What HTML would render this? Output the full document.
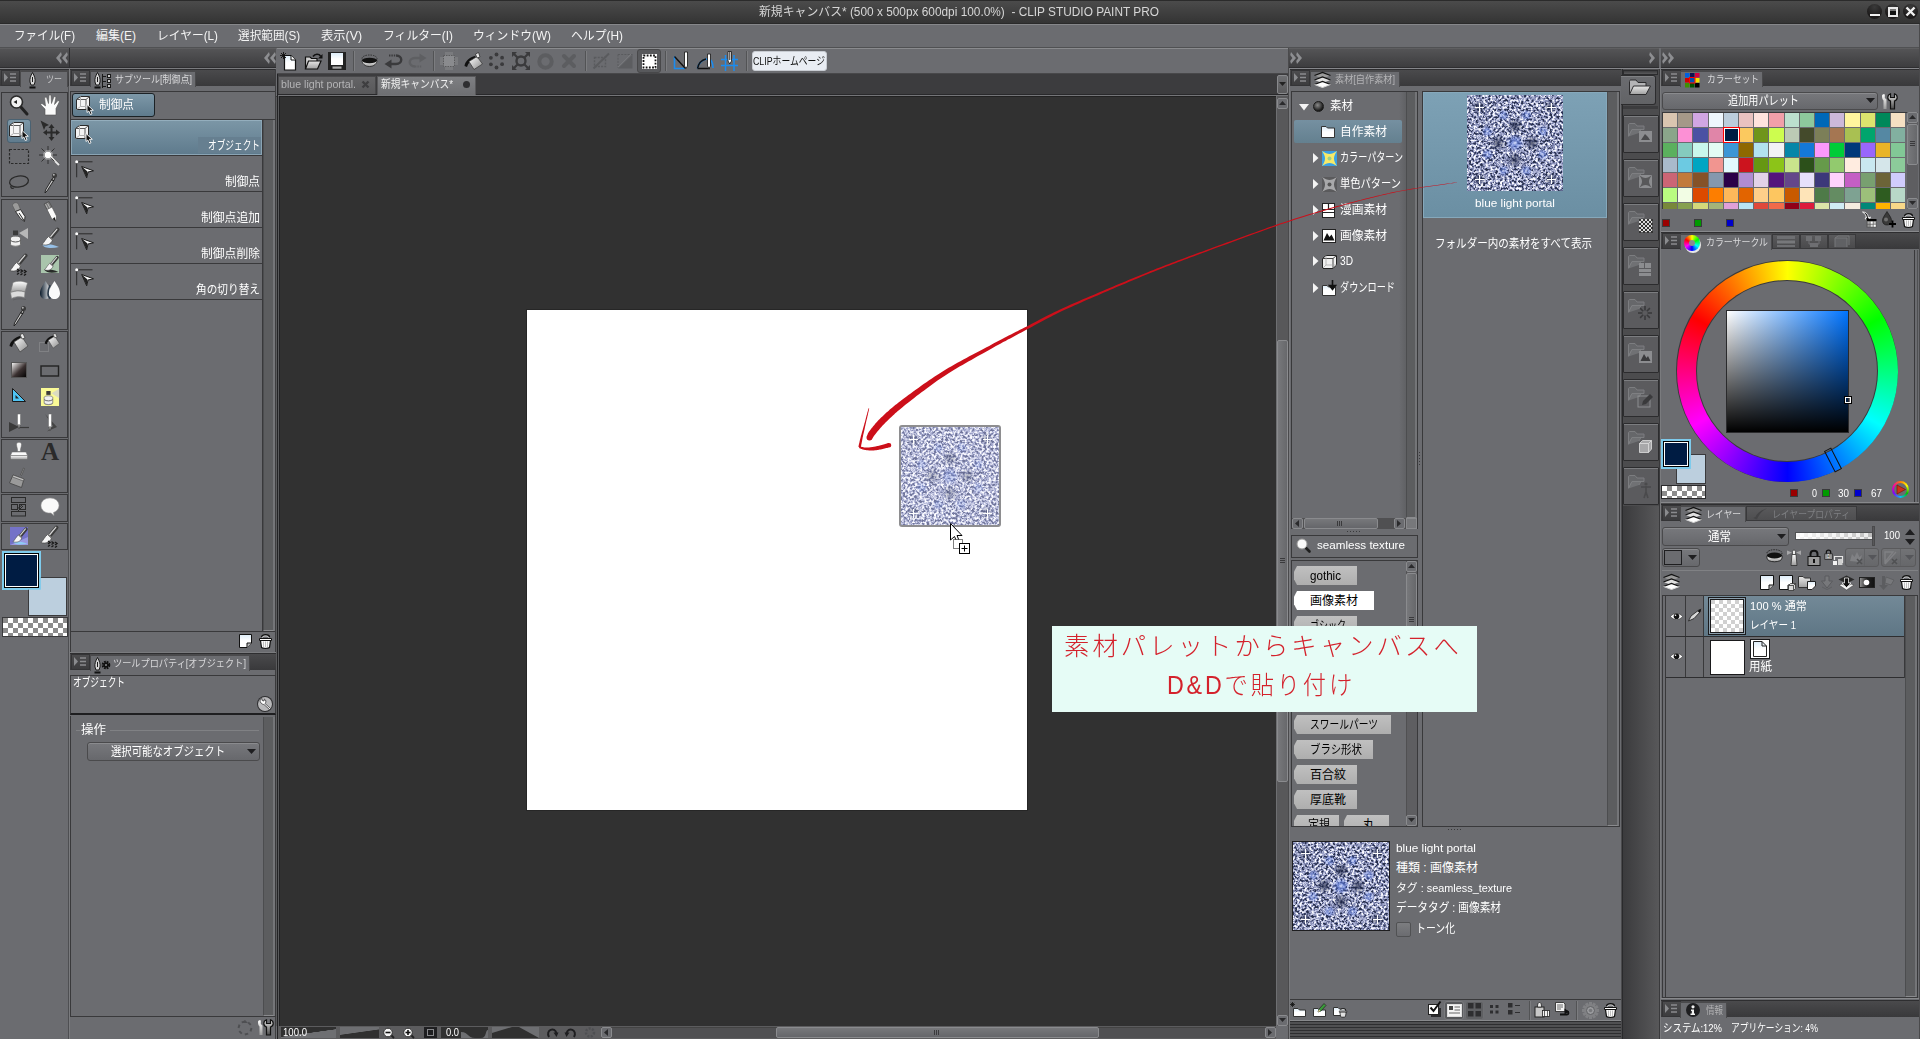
<!DOCTYPE html>
<html lang="ja"><head><meta charset="utf-8"><title>CLIP STUDIO PAINT PRO</title>
<style>
*{box-sizing:border-box;margin:0;padding:0}
html,body{width:1920px;height:1039px;overflow:hidden;background:#6b6c70}
body{position:relative;font-family:"Liberation Sans","Noto Sans CJK JP",sans-serif;font-size:12px;color:#f2f2f2}
div,span.t,svg{position:absolute}
span.t{white-space:nowrap;transform-origin:0 50%;display:block}
svg{overflow:visible}
</style></head>
<body>
<div style="left:0px;top:0px;width:1920px;height:24px;background:linear-gradient(#4b4b4b,#343434);border-top:1px solid #2b2b2b;border-bottom:1px solid #2a2a2a"></div>
<span class="t" style="left:759.0px;transform:scaleX(0.988);top:3.5px;font-size:12px;line-height:16px;color:#d6d6d6;white-space:pre;">新規キャンバス* (500 x 500px 600dpi 100.0%)  - CLIP STUDIO PAINT PRO</span>
<div style="left:1867.0px;top:3.8px;width:15px;height:15px;border-radius:50%;background:radial-gradient(circle at 50% 20%,#3a3a3a,#1c1a1a 70%)"></div>
<div style="left:1885.2px;top:3.8px;width:15px;height:15px;border-radius:50%;background:radial-gradient(circle at 50% 20%,#3a3a3a,#1c1a1a 70%)"></div>
<div style="left:1903.2px;top:3.8px;width:15px;height:15px;border-radius:50%;background:radial-gradient(circle at 50% 20%,#3a3a3a,#1c1a1a 70%)"></div>
<div style="left:1870px;top:14px;width:10px;height:2px;background:#f0f0f0"></div>
<div style="left:1888px;top:7px;width:10px;height:10px;border:2px solid #e8e8e8;background:linear-gradient(#777 0 30%,#111 30%)"></div>
<svg style="left:1905px;top:6px;" width="11" height="11" viewBox="0 0 11 11"><path d="M1.5 1.5 L9.5 9.5 M9.5 1.5 L1.5 9.5" stroke="#f0f0f0" stroke-width="2.4" fill="none"/></svg>
<div style="left:0px;top:24px;width:1920px;height:24px;background:#6b6c70;border-top:1px solid #86878a;border-bottom:1px solid #505153"></div>
<span class="t" style="left:14.0px;transform:scaleX(0.963);top:27.5px;font-size:12px;line-height:16px;color:#f4f4f4;">ファイル(F)</span>
<span class="t" style="left:96.0px;top:27.5px;font-size:12px;line-height:16px;color:#f4f4f4;">編集(E)</span>
<span class="t" style="left:157.0px;transform:scaleX(0.979);top:27.5px;font-size:12px;line-height:16px;color:#f4f4f4;">レイヤー(L)</span>
<span class="t" style="left:238.0px;transform:scaleX(0.969);top:27.5px;font-size:12px;line-height:16px;color:#f4f4f4;">選択範囲(S)</span>
<span class="t" style="left:321.0px;transform:scaleX(1.025);top:27.5px;font-size:12px;line-height:16px;color:#f4f4f4;">表示(V)</span>
<span class="t" style="left:383.0px;transform:scaleX(0.985);top:27.5px;font-size:12px;line-height:16px;color:#f4f4f4;">フィルター(I)</span>
<span class="t" style="left:473.0px;transform:scaleX(0.983);top:27.5px;font-size:12px;line-height:16px;color:#f4f4f4;">ウィンドウ(W)</span>
<span class="t" style="left:571.0px;transform:scaleX(0.987);top:27.5px;font-size:12px;line-height:16px;color:#f4f4f4;">ヘルプ(H)</span>
<div style="left:0px;top:48px;width:69px;height:20px;background:linear-gradient(#545456,#3d3d3f);border-top:1px solid #5e5e60;border-bottom:1px solid #2e2e30"></div>
<div style="left:70px;top:48px;width:206px;height:20px;background:linear-gradient(#545456,#3d3d3f);border-top:1px solid #5e5e60;border-bottom:1px solid #2e2e30"></div>
<div style="left:0px;top:68px;width:276px;height:1px;background:#7a7b7e"></div>
<div style="left:68px;top:69px;width:1px;height:970px;background:#4e4f52"></div>
<div style="left:69px;top:69px;width:1px;height:970px;background:#7a7b7e"></div>
<div style="left:69px;top:48px;width:1px;height:20px;background:#2e2e30"></div>
<svg style="left:56px;top:52px;" width="12" height="12" viewBox="0 0 12 12"><path d="M5 0 L0 6 L5 12 L5.8 9 L3.6 6 L5.8 3 Z M11 0 L6 6 L11 12 L11.8 9 L9.6 6 L11.8 3 Z" fill="#8d8e91"/></svg>
<svg style="left:264px;top:52px;" width="12" height="12" viewBox="0 0 12 12"><path d="M5 0 L0 6 L5 12 L5.8 9 L3.6 6 L5.8 3 Z M11 0 L6 6 L11 12 L11.8 9 L9.6 6 L11.8 3 Z" fill="#8d8e91"/></svg>
<div style="left:277px;top:48px;width:1011px;height:26px;background:#6b6c70;border-top:1px solid #8a8b8e;border-bottom:1px solid #48484a"></div>
<svg style="left:280px;top:52px;" width="17" height="19" viewBox="0 0 17 19"><path d="M4.500 3.500H11L15.500 8V18H4.500Z" fill="url(#gPaper)" stroke="#111" stroke-width="1.200"/><path d="M11 3.500V8H15.500" fill="#fff" stroke="#111" stroke-width="1"/><path d="M3.500 0V7M0 3.500H7M1 1L6 6M6 1L1 6" stroke="#111" stroke-width=".9"/></svg>
<svg style="left:304px;top:52px;" width="19" height="19" viewBox="0 0 19 19"><path d="M1.500 17V5H6L7.500 6.500H13V9" fill="#d0d0d0" stroke="#111" stroke-width="1.200"/><path d="M1.500 17L4.500 9H17L13.500 17Z" fill="url(#gFolder)" stroke="#111" stroke-width="1.200"/><path d="M9 4.500C11 1.500 15 1.500 16.500 4" fill="none" stroke="#111" stroke-width="1.600"/><path d="M18.500 2V6.500H14Z" fill="#111"/></svg>
<svg style="left:328px;top:52px;" width="18" height="18" viewBox="0 0 18 18"><rect x="0" y="0" width="18" height="18" fill="#222"/><rect x="3" y="1" width="12" height="12" fill="url(#gPaper)"/><rect x="4.500" y="14.500" width="9" height="2.200" fill="#aaa"/></svg>
<div style="left:353px;top:51px;width:1px;height:20px;background:#525355"></div>
<div style="left:354px;top:51px;width:1px;height:20px;background:#7c7d80"></div>
<svg style="left:361px;top:54px;" width="17" height="13" viewBox="0 0 17 13"><ellipse cx="8.500" cy="4.500" rx="7.500" ry="3.500" fill="none" stroke="#222" stroke-width=".8" stroke-dasharray="1.500 1"/><path d="M1 6.500C1 9.500 4 12.500 8.500 12.500C13 12.500 16 9.500 16 6.500Z" fill="url(#gMetalV)" stroke="#222" stroke-width=".8"/><ellipse cx="8.500" cy="6.500" rx="7.500" ry="2.800" fill="#111"/></svg>
<svg style="left:384px;top:54px;" width="19" height="14" viewBox="0 0 19 14"><path d="M5 1.500H12" stroke="#3a3a3c" stroke-width="2" stroke-dasharray="1.400 1"/><path d="M12 1.500C19 1.500 19 10 12 10H7" fill="none" stroke="#3a3a3c" stroke-width="2.400"/><path d="M0.500 10L7.500 5.500V14.500Z" fill="#3a3a3c"/></svg>
<svg style="left:408px;top:54px;" width="19" height="14" viewBox="0 0 19 14"><path d="M7 12.500H14" stroke="#5e5f62" stroke-width="2" stroke-dasharray="1.400 1"/><path d="M7 12.500C0 12.500 0 4 7 4H12" fill="none" stroke="#5e5f62" stroke-width="2.400"/><path d="M18.500 4L11.500 -0.500V8.500Z" fill="#5e5f62"/></svg>
<div style="left:433px;top:51px;width:1px;height:20px;background:#525355"></div>
<div style="left:434px;top:51px;width:1px;height:20px;background:#7c7d80"></div>
<svg style="left:440px;top:52px;" width="18" height="18" viewBox="0 0 18 18"><path d="M5 0H13V5H18V13H13V18H5V13H0V5H5Z" fill="#7a7b7e"/><rect x="3.500" y="3.500" width="11" height="11" fill="#8a8b8e" stroke="#5a5a5c" stroke-width="1" stroke-dasharray="1.500 1"/></svg>
<svg style="left:464px;top:52px;" width="19" height="19" viewBox="0 0 19 19"><path d="M0.500 14C1 9 6 5 11 4L12 6C7 8 4 11 3 15Z" fill="#111"/><path d="M5 9.500L13 4.500L18.500 12L10 17.500Z" fill="url(#gMetal)" stroke="#333" stroke-width=".7"/><path d="M11.500 2L14.500 0.500L16 5L13 6Z" fill="#e8e8e8" stroke="#222" stroke-width=".7"/></svg>
<svg style="left:488px;top:52px;" width="18" height="18" viewBox="0 0 18 18"><circle cx="8.5" cy="15.5" r="1.900" fill="#3a3a3c"/><circle cx="2.9" cy="12.3" r="1.900" fill="#3a3a3c"/><circle cx="2.9" cy="5.8" r="1.900" fill="#3a3a3c"/><circle cx="8.5" cy="2.5" r="1.900" fill="#3a3a3c"/><circle cx="14.1" cy="5.7" r="1.900" fill="#3a3a3c"/><circle cx="14.1" cy="12.2" r="1.900" fill="#3a3a3c"/></svg>
<svg style="left:512px;top:52px;" width="18" height="18" viewBox="0 0 18 18"><circle cx="9" cy="9" r="4.500" fill="none" stroke="#3a3a3c" stroke-width="2.400"/><path d="M5.500 5.500L1.500 1.500M12.500 5.500L16.500 1.500M5.500 12.500L1.500 16.500M12.500 12.500L16.500 16.500" stroke="#3a3a3c" stroke-width="2.200"/><path d="M0 0H5L0 5ZM18 0H13L18 5ZM0 18H5L0 13ZM18 18H13L18 13Z" fill="#3a3a3c"/></svg>
<svg style="left:537px;top:53px;" width="17" height="17" viewBox="0 0 17 17"><circle cx="8.500" cy="8.500" r="6.200" fill="none" stroke="#5c5d60" stroke-width="4"/></svg>
<svg style="left:562px;top:54px;" width="14" height="14" viewBox="0 0 14 14"><path d="M2 2L12 12M12 2L2 12" stroke="#5c5d60" stroke-width="4" stroke-linecap="round"/></svg>
<div style="left:585px;top:51px;width:1px;height:20px;background:#525355"></div>
<div style="left:586px;top:51px;width:1px;height:20px;background:#7c7d80"></div>
<svg style="left:593px;top:53px;" width="17" height="16" viewBox="0 0 17 16"><rect x="1.500" y="4.500" width="11" height="9" fill="none" stroke="#5a5b5e" stroke-width="1.400" stroke-dasharray="2 1.200"/><path d="M0.500 15.500L16 0.500" stroke="#5a5b5e" stroke-width="2"/></svg>
<svg style="left:617px;top:53px;" width="17" height="16" viewBox="0 0 17 16"><path d="M1 1.500H15.500M1 1.500V15" stroke="#5a5b5e" stroke-width="1" stroke-dasharray="2 1.200" fill="none"/><path d="M1 15.500L15.500 1.500V15.500Z" fill="#5c5d60"/><path d="M1 14L14 1" stroke="#77787b" stroke-width="1"/></svg>
<div style="left:637px;top:49px;width:24px;height:24px;background:#58595c;border:1px solid #48484a;border-radius:3px"></div>
<svg style="left:642px;top:54px;" width="15" height="15" viewBox="0 0 15 15"><rect x="0" y="0" width="15" height="15" fill="#fff"/><rect x="1.500" y="1.500" width="12" height="12" fill="none" stroke="#111" stroke-width="1.800" stroke-dasharray="1.800 1.400"/></svg>
<div style="left:665px;top:51px;width:1px;height:20px;background:#525355"></div>
<div style="left:666px;top:51px;width:1px;height:20px;background:#7c7d80"></div>
<svg style="left:673px;top:51px;" width="17" height="20" viewBox="0 0 17 20"><path d="M1.500 5.500V17.500H12" fill="none" stroke="#1a8cf0" stroke-width="1.600"/><path d="M1.500 5.500L12.500 17.500" stroke="#111" stroke-width="1.400"/><path d="M11.500 1V15L13 17.500L14.500 15V1Z" fill="#fff" stroke="#222" stroke-width=".9"/></svg>
<svg style="left:696px;top:51px;" width="18" height="20" viewBox="0 0 18 20"><path d="M1.500 17.500C2.500 11 8 7.500 13 8C16 9 17 13 17 17" fill="none" stroke="#1a8cf0" stroke-width="1.600"/><path d="M1.500 17.500H14M1.500 17.500C2.500 12 6 9 10 8" fill="none" stroke="#111" stroke-width="1.400"/><path d="M11.500 3V15L13 17.500L14.500 15V3Z" fill="#fff" stroke="#222" stroke-width=".9"/></svg>
<svg style="left:721px;top:51px;" width="18" height="20" viewBox="0 0 18 20"><path d="M0 8.500H17M0 14.500H17M4.500 4V20M13 4V20" stroke="#1a8cf0" stroke-width="1.500"/><path d="M7 0.500V10L8.800 13L10.500 10V0.500Z" fill="#fff" stroke="#222" stroke-width=".9"/><path d="M8.800 1V9" stroke="#222" stroke-width="1"/></svg>
<div style="left:746px;top:51px;width:1px;height:20px;background:#525355"></div>
<div style="left:747px;top:51px;width:1px;height:20px;background:#7c7d80"></div>
<div style="left:752px;top:51px;width:75px;height:20px;background:#e9edf3;border:1px solid #c8ccd2;border-radius:3px"></div>
<span class="t" style="left:753.0px;transform:scaleX(0.801);top:53.5px;font-size:11px;line-height:15px;color:#111111;">CLIPホームページ</span>
<div style="left:1289px;top:48px;width:370px;height:20px;background:linear-gradient(#545456,#3d3d3f);border-top:1px solid #5e5e60;border-bottom:1px solid #2e2e30"></div>
<div style="left:1661px;top:48px;width:259px;height:20px;background:linear-gradient(#545456,#3d3d3f);border-top:1px solid #5e5e60;border-bottom:1px solid #2e2e30"></div>
<div style="left:1289px;top:68px;width:631px;height:1px;background:#85868a"></div>
<svg style="left:1291px;top:52px;" width="12" height="12" viewBox="0 0 12 12"><path d="M0 0 L5 6 L0 12 L-0.8 9 L1.4 6 L-0.8 3 Z M6 0 L11 6 L6 12 L5.2 9 L7.4 6 L5.2 3 Z" fill="#8d8e91"/></svg>
<svg style="left:1663px;top:52px;" width="12" height="12" viewBox="0 0 12 12"><path d="M0 0 L5 6 L0 12 L-0.8 9 L1.4 6 L-0.8 3 Z M6 0 L11 6 L6 12 L5.2 9 L7.4 6 L5.2 3 Z" fill="#8d8e91"/></svg>
<svg style="left:1649px;top:52px;" width="8" height="12" viewBox="0 0 8 12"><path d="M1 0 L6 6 L1 12 L0.2 9 L2.4 6 L0.2 3 Z" fill="#8d8e91"/></svg>
<div style="left:0px;top:69px;width:69px;height:17px;background:linear-gradient(#4a4a4c,#39393b);border-top:1px solid #2e2e30"></div>
<div style="left:1px;top:70px;width:19px;height:16px;background:linear-gradient(#4c4c4e,#3c3c3e);border:1px solid #343436"></div>
<svg style="left:4px;top:73px;" width="13" height="9" viewBox="0 0 13 9"><path d="M0 0L4 4.5L0 9Z" fill="#8a8b8e"/><path d="M6 1H12M6 4.500H12M6 8H12" stroke="#8a8b8e" stroke-width="1.6"/></svg>
<div style="left:20px;top:71px;width:48px;height:16px;background:#6b6c70;border:1px solid #4a4a4c;border-bottom:none"></div>
<svg style="left:28px;top:72px;" width="9" height="17" viewBox="0 0 9 17"><path d="M4.500 0.500C2.500 4 1.500 7 2 10L3 13H6L7 10C7.500 7 6.500 4 4.500 0.500Z" fill="#d8d8d8" stroke="#1a1a1a" stroke-width="1"/><path d="M4.500 5V10" stroke="#1a1a1a" stroke-width="1"/><path d="M1.500 15.500H7.500" stroke="#111" stroke-width="2"/></svg>
<span class="t" style="left:46.0px;transform:scaleX(0.800);top:73.0px;font-size:10px;line-height:14px;color:#c8c8ca;">ツー</span>
<div style="left:1px;top:92px;width:67px;height:105px;border:1px solid #39393b;background:#6b6c70"></div>
<div style="left:1px;top:199px;width:67px;height:131px;border:1px solid #39393b;background:#6b6c70"></div>
<div style="left:1px;top:331px;width:67px;height:107px;border:1px solid #39393b;background:#6b6c70"></div>
<div style="left:1px;top:439px;width:67px;height:54px;border:1px solid #39393b;background:#6b6c70"></div>
<div style="left:1px;top:494px;width:67px;height:28px;border:1px solid #39393b;background:#6b6c70"></div>
<div style="left:1px;top:523px;width:67px;height:27px;border:1px solid #39393b;background:#6b6c70"></div>
<svg width="0" height="0" style="left:0;top:0"><defs>
<linearGradient id="gMetal" x1="0" y1="0" x2="1" y2="1"><stop offset="0" stop-color="#fff"/><stop offset="1" stop-color="#8a8a8a"/></linearGradient>
<linearGradient id="gMetalV" x1="0" y1="0" x2="0" y2="1"><stop offset="0" stop-color="#fff"/><stop offset="1" stop-color="#9a9a9a"/></linearGradient>
<linearGradient id="gDark" x1="0" y1="0" x2="1" y2="1"><stop offset="0" stop-color="#fff"/><stop offset=".55" stop-color="#3a3030"/><stop offset="1" stop-color="#000"/></linearGradient>
<linearGradient id="gDrop" x1="0" y1="0" x2="1" y2="0"><stop offset="0" stop-color="#0a1a2a"/><stop offset="1" stop-color="#fff"/></linearGradient>
<linearGradient id="gPaper" x1="0" y1="0" x2="0" y2="1"><stop offset="0" stop-color="#dcecf8"/><stop offset=".5" stop-color="#fff"/></linearGradient>
<linearGradient id="gDarkH" x1="0" y1="0" x2="1" y2="0"><stop offset="0" stop-color="#999"/><stop offset=".5" stop-color="#222"/><stop offset="1" stop-color="#111"/></linearGradient>
<linearGradient id="gWrench" x1="0" y1="0" x2="0" y2="1"><stop offset="0" stop-color="#e8e8e8"/><stop offset="1" stop-color="#4a4a4a"/></linearGradient>
<linearGradient id="gFolder" x1="0" y1="0" x2="0" y2="1"><stop offset="0" stop-color="#e8e8e8"/><stop offset="1" stop-color="#a0a0a0"/></linearGradient>
</defs></svg>
<div style="left:7px;top:119px;width:24px;height:24px;background:linear-gradient(#7d98a8,#5f7b8d);border-radius:3px;border:1px solid #4a6272"></div>
<svg style="left:8px;top:94px;" width="22" height="22" viewBox="0 0 22 22"><path d="M12 12L19 20" stroke="#222" stroke-width="3" stroke-linecap="round"/><circle cx="8.500" cy="8" r="6" fill="#f2f2f2" stroke="#2a2a2a" stroke-width="1.600"/><path d="M5.500 8L9 6V10Z" fill="#222"/></svg>
<svg style="left:39px;top:94px;" width="22" height="22" viewBox="0 0 22 22"><path d="M6 21V15L1.500 10.500L3 9.500L6.500 12L5.500 3.500L7.500 3L9.500 9.500L10 1L12 1L12.500 9.500L15 2.500L17 3L15.500 10.500L19 6.500L20.500 7.500L17 14.500V21Z" fill="#fafafa" stroke="#555" stroke-width=".6"/></svg>
<svg style="left:8px;top:120px;" width="22" height="22" viewBox="0 0 22 22"><path d="M1.500 5.500L5.500 2.500H15.500V13.500L12 16.500H1.500Z" fill="#f4f4f4" stroke="#2a2a2a" stroke-width="1"/><path d="M1.500 5.500H12V16.500M12 5.500L15.500 2.500" fill="none" stroke="#5a5a5a" stroke-width="1"/><path d="M5.500 2.500V13.500H15.500M5.500 13.500L1.500 16.500" fill="none" stroke="#b0b0b0" stroke-width="1"/><path d="M14 10.500V18.500L15.800 17L17.300 20.500L19 19.800L17.500 16.300H20.300Z" fill="#111" stroke="#fff" stroke-width=".9"/></svg>
<svg style="left:39px;top:120px;" width="22" height="22" viewBox="0 0 22 22"><path d="M1.500 0.500L10 5L6.500 6.500L5 10Z" fill="#2a2a2a"/><path d="M12.500 4L15.500 8H13.500V11.500H17V9.500L21 12.500L17 15.500V13.500H13.500V17H15.500L12.500 21L9.500 17H11.500V13.500H8V15.500L4 12.500L8 9.500V11.500H11.500V8H9.500Z" fill="#2a2a2a"/></svg>
<svg style="left:8px;top:146px;" width="22" height="22" viewBox="0 0 22 22"><rect x="1.500" y="3.500" width="19" height="14" fill="none" stroke="#2a2a2a" stroke-width="1.200" stroke-dasharray="2.500 1.500"/></svg>
<svg style="left:39px;top:146px;" width="22" height="22" viewBox="0 0 22 22"><path d="M10 9L20 19" stroke="#e8e8e8" stroke-width="2"/><path d="M10 9L20 19" stroke="#555" stroke-width=".6" transform="translate(.9 -.9)"/><path d="M9 0V18M0 9H18M2.500 2.500L15.500 15.500M15.500 2.500L2.500 15.500" stroke="#2a2a2a" stroke-width=".9"/><circle cx="9" cy="9" r="3.200" fill="#fff"/><circle cx="9" cy="9" r="5" fill="#fff" opacity=".35"/></svg>
<svg style="left:8px;top:172px;" width="22" height="22" viewBox="0 0 22 22"><ellipse cx="11" cy="9.500" rx="9.500" ry="5.500" fill="none" stroke="#2a2a2a" stroke-width="1.300" transform="rotate(-8 11 9.500)"/><path d="M3.500 13.500C2 15 3 17 6 16" fill="none" stroke="#2a2a2a" stroke-width="1.200"/></svg>
<svg style="left:39px;top:172px;" width="22" height="22" viewBox="0 0 22 22"><circle cx="15.500" cy="3.500" r="2.500" fill="#3a3a3a"/><circle cx="14.800" cy="2.800" r="1" fill="#b0b0b0"/><path d="M14 5.500L16 6.500L8 19L6 21L6.500 18Z" fill="#c8c8c8" stroke="#1e1e1e" stroke-width=".9"/><path d="M12.500 7.500L15 8.800" stroke="#1e1e1e" stroke-width="1.400"/></svg>
<svg style="left:8px;top:201px;" width="22" height="22" viewBox="0 0 22 22"><path d="M4.500 4.500C4.500 1.500 9.500 0.500 10.500 3.500L12.500 8.500L7.500 10.500Z" fill="#9a9a9a" stroke="#555" stroke-width=".6"/><path d="M7.500 10.500L12.500 8.500L17 15.500L16.500 20.500L12.500 17.500Z" fill="#f6f6f6" stroke="#222" stroke-width=".9"/><path d="M11 12L16 19.500" stroke="#222" stroke-width="1"/></svg>
<svg style="left:39px;top:201px;" width="22" height="22" viewBox="0 0 22 22"><path d="M5 3L10 0.500L13 6L8 8.500Z" fill="#777" stroke="#444" stroke-width=".6"/><path d="M6.500 3.200L9 8M8.500 2.200L11 7" stroke="#ccc" stroke-width=".8"/><path d="M8 8.500L13 6L17.500 15L17 20.500L12.500 17.500Z" fill="#fafafa" stroke="#555" stroke-width=".7"/><path d="M15.500 16L17 20.500L13.800 18Z" fill="#111"/></svg>
<svg style="left:8px;top:227px;" width="22" height="22" viewBox="0 0 22 22"><g transform="translate(0 0)"><path d="M11 6L20 1V12Z" fill="#d0d0d0" opacity=".75"/><rect x="5" y="3.500" width="5" height="4.500" fill="#3a3a3a"/><path d="M2.500 11C2.500 8.500 12.500 8.500 12.500 11V17.500C12.500 20 2.500 20 2.500 17.500Z" fill="#f0f0f0" stroke="#555" stroke-width=".7"/><path d="M2.500 13.500C5 15.500 10 15.500 12.500 13.500" stroke="#555" stroke-width="1" fill="none"/><path d="M2.500 17.500C5 19.800 10 19.800 12.500 17.500" stroke="#888" stroke-width=".8" fill="none"/></g></svg>
<svg style="left:39px;top:227px;" width="22" height="22" viewBox="0 0 22 22"><g transform="translate(0 0)"><path d="M3 17.500C7 16 14 17.500 20 20C13 21.500 5 21.500 3 17.500Z" fill="#9ccaf4" opacity=".9"/><path d="M18.500 2.500L11.500 11" stroke="#3c3c3c" stroke-width="4" stroke-linecap="round"/><path d="M17.800 2.300L11 10.500" stroke="#d4d4d4" stroke-width="1.300" stroke-linecap="round"/><path d="M9.500 9.500L13.500 13C12 17.500 7.500 19 3 17.500C5.500 15 6.500 12 9.500 9.500Z" fill="#f6f6f6" stroke="#444" stroke-width=".7"/><path d="M9.800 9.300L13.700 12.800" stroke="#777" stroke-width="1.400"/></g></svg>
<svg style="left:8px;top:253px;" width="22" height="22" viewBox="0 0 22 22"><g transform="translate(-1 0)"><path d="M3 17.500C7 16 14 17.500 20 20C13 21.500 5 21.500 3 17.500Z" fill="none" opacity=".9"/><path d="M18.500 2.500L11.500 11" stroke="#3c3c3c" stroke-width="4" stroke-linecap="round"/><path d="M17.800 2.300L11 10.500" stroke="#d4d4d4" stroke-width="1.300" stroke-linecap="round"/><path d="M9.500 9.500L13.500 13C12 17.500 7.500 19 3 17.500C5.500 15 6.500 12 9.500 9.500Z" fill="#f6f6f6" stroke="#444" stroke-width=".7"/><path d="M9.800 9.300L13.700 12.800" stroke="#777" stroke-width="1.400"/></g><path d="M9 19l2 -1.500l-2 -1.500M12.500 19.500l2 -1.500l-2 -1.500M16 20l2 -1.500l-2 -1.500M9 21.500l2 -1.500M12.500 22l2 -1.500M16 22.500l2 -1.500" stroke="#1a1a1a" stroke-width="1.400" fill="none"/></svg>
<svg style="left:39px;top:253px;" width="22" height="22" viewBox="0 0 22 22"><rect x="2" y="2" width="18" height="18" fill="#a9c5ac"/><g transform="translate(3 2.500) scale(.82)"><path d="M3 17.500C7 16 14 17.500 20 20C13 21.500 5 21.500 3 17.500Z" fill="#1a1a1a" opacity=".9"/><path d="M18.500 2.500L11.500 11" stroke="#3c3c3c" stroke-width="4" stroke-linecap="round"/><path d="M17.800 2.300L11 10.500" stroke="#d4d4d4" stroke-width="1.300" stroke-linecap="round"/><path d="M9.500 9.500L13.500 13C12 17.500 7.500 19 3 17.500C5.500 15 6.500 12 9.500 9.500Z" fill="#f6f6f6" stroke="#444" stroke-width=".7"/><path d="M9.800 9.300L13.700 12.800" stroke="#777" stroke-width="1.400"/></g></svg>
<svg style="left:8px;top:279px;" width="22" height="22" viewBox="0 0 22 22"><path d="M5 3.500C10 1.500 15 2 19.500 4L17 13C12.500 11.500 7.500 11.500 2.500 13.500Z" fill="url(#gMetalV)" stroke="#777" stroke-width=".6"/><path d="M2.500 13.500C7.500 11.500 12.500 11.500 17 13L16.500 18.500C12 17 7.500 17.500 3.500 19.500Z" fill="#dcdcdc" stroke="#777" stroke-width=".6"/><path d="M5 21C9 19.500 13 19.500 18 20.500" stroke="#555" stroke-width=".8" opacity=".6" fill="none"/></svg>
<svg style="left:39px;top:279px;" width="22" height="22" viewBox="0 0 22 22"><path d="M6.500 2C9 6 12 10 12 14.500C12 18 9.500 20 6.500 20C3.500 20 1 18 1 14.500C1 10 4 6 6.500 2Z" fill="url(#gDrop)"/><path d="M15.500 2C18 6 21 10 21 14.500C21 18 18.500 20 15.500 20C12.500 20 10 18 10 14.500C10 10 13 6 15.500 2Z" fill="#fafafa"/><path d="M11 6C9.800 9 9 11.500 9 14.500C9 17 10 18.800 11.500 19.500" fill="none" stroke="#2a3a4a" stroke-width="1.600"/></svg>
<svg style="left:8px;top:305px;" width="22" height="22" viewBox="0 0 22 22"><circle cx="15.500" cy="3.500" r="2.500" fill="#3a3a3a"/><circle cx="14.800" cy="2.800" r="1" fill="#b0b0b0"/><path d="M14 5.500L16 6.500L8 19L6 21L6.500 18Z" fill="#c8c8c8" stroke="#1e1e1e" stroke-width=".9"/><path d="M12.500 7.500L15 8.800" stroke="#1e1e1e" stroke-width="1.400"/></svg>
<svg style="left:8px;top:333px;" width="22" height="22" viewBox="0 0 22 22"><g transform="translate(0 0) scale(1.0)"><path d="M1.500 13C2 8 8 4 12 3L13 5C8 7 5 10 4 14Z" fill="#111"/><path d="M6 9L14 4L20 13L12 19Z" fill="url(#gMetal)" stroke="#444" stroke-width=".7"/><path d="M12 1.500L15 0.500L17 5L14 6Z" fill="#e8e8e8" stroke="#333" stroke-width=".7"/></g></svg>
<svg style="left:39px;top:333px;" width="22" height="22" viewBox="0 0 22 22"><rect x="0.500" y="9.500" width="9" height="9" fill="none" stroke="#808184" stroke-width="1"/><g transform="translate(4.5 0) scale(0.8)"><path d="M1.500 13C2 8 8 4 12 3L13 5C8 7 5 10 4 14Z" fill="#111"/><path d="M6 9L14 4L20 13L12 19Z" fill="url(#gMetal)" stroke="#444" stroke-width=".7"/><path d="M12 1.500L15 0.500L17 5L14 6Z" fill="#e8e8e8" stroke="#333" stroke-width=".7"/></g></svg>
<svg style="left:8px;top:360px;" width="22" height="22" viewBox="0 0 22 22"><rect x="3.500" y="2.500" width="15" height="15" fill="url(#gDark)" stroke="#555" stroke-width="1"/></svg>
<svg style="left:39px;top:360px;" width="22" height="22" viewBox="0 0 22 22"><rect x="2" y="6" width="17.500" height="10" fill="none" stroke="#222" stroke-width="1.400"/></svg>
<svg style="left:8px;top:386px;" width="22" height="22" viewBox="0 0 22 22"><path d="M4.500 2.500V15.500H17.500Z" fill="#4fc4f4" stroke="#1a1a1a" stroke-width="1"/><path d="M7.500 9V12.500H11Z" fill="#222"/></svg>
<svg style="left:39px;top:386px;" width="22" height="22" viewBox="0 0 22 22"><rect x="2" y="2" width="18" height="18" fill="#fafa96"/><g transform="translate(3 2) scale(.86)"><path d="M11 6L20 1V12Z" fill="#d0d0d0" opacity=".75"/><rect x="5" y="3.500" width="5" height="4.500" fill="#3a3a3a"/><path d="M2.500 11C2.500 8.500 12.500 8.500 12.500 11V17.500C12.500 20 2.500 20 2.500 17.500Z" fill="#f0f0f0" stroke="#555" stroke-width=".7"/><path d="M2.500 13.500C5 15.500 10 15.500 12.500 13.500" stroke="#555" stroke-width="1" fill="none"/><path d="M2.500 17.500C5 19.800 10 19.800 12.500 17.500" stroke="#888" stroke-width=".8" fill="none"/></g></svg>
<svg style="left:8px;top:412px;" width="22" height="22" viewBox="0 0 22 22"><path d="M1 10L11 15L1 20Z" fill="#3a3a3a"/><path d="M11 15.500H21" stroke="#3a3a3a" stroke-width="1.200"/><rect x="9.500" y="2" width="3" height="11" fill="#fff" stroke="#666" stroke-width=".5"/><path d="M10 13L11 17L12 13Z" fill="#ddd" stroke="#333" stroke-width=".5"/></svg>
<svg style="left:39px;top:412px;" width="22" height="22" viewBox="0 0 22 22"><path d="M6 2L18 15L8 19.500L14 14Z" fill="#444"/><rect x="9.500" y="2" width="3" height="13" fill="#fff" stroke="#666" stroke-width=".5"/><path d="M10 15L11 19L12 15Z" fill="#ddd" stroke="#333" stroke-width=".5"/></svg>
<svg style="left:8px;top:441px;" width="22" height="22" viewBox="0 0 22 22"><path d="M8.500 3.500C8.500 0.500 13.500 0.500 13.500 3.500C13.500 6 12 8 12.500 10.500H9.500C10 8 8.500 6 8.500 3.500Z" fill="#f6f6f6" stroke="#666" stroke-width=".5"/><path d="M4 11H18L19.500 14.500H2.500Z" fill="#fafafa" stroke="#666" stroke-width=".5"/><path d="M2.500 14.500H19.500V18.500H2.500Z" fill="url(#gMetalV)" stroke="#666" stroke-width=".5"/></svg>
<svg style="left:39px;top:441px;" width="22" height="22" viewBox="0 0 22 22"><text x="11" y="19" font-family="Liberation Serif,serif" font-weight="bold" font-size="25" text-anchor="middle" fill="#2a2a2a">A</text></svg>
<svg style="left:8px;top:467px;" width="22" height="22" viewBox="0 0 22 22"><path d="M15.500 1L16.500 1.500L13.500 8.500L12.500 8Z" fill="#999" stroke="#444" stroke-width=".6"/><path d="M5 8L16 12L13.500 20.500L1.500 16Z" fill="#9a9a9a" stroke="#444" stroke-width=".8"/><path d="M5 8L16 12L15.500 14L4.500 10Z" fill="#c4c4c4" stroke="#444" stroke-width=".6"/></svg>
<svg style="left:8px;top:496px;" width="22" height="22" viewBox="0 0 22 22"><rect x="3.500" y="1.500" width="14" height="5" fill="none" stroke="#2a2a2a" stroke-width="1"/><rect x="3.500" y="8.500" width="6" height="5" fill="none" stroke="#2a2a2a" stroke-width="1"/><rect x="11.500" y="8.500" width="6" height="5" fill="none" stroke="#2a2a2a" stroke-width="1"/><rect x="3.500" y="15.500" width="14" height="4.500" fill="none" stroke="#2a2a2a" stroke-width="1"/><path d="M8 14L14 9M10 15L15 10" stroke="#2a2a2a" stroke-width="1"/></svg>
<svg style="left:39px;top:496px;" width="22" height="22" viewBox="0 0 22 22"><path d="M11 2C16 2 20 5 20 9.500C20 13 17.500 15.500 14.500 16.500L15 19.500L12 17C6 17.500 2 14 2 9.500C2 5 6 2 11 2Z" fill="#fafafa" stroke="#999" stroke-width=".6"/></svg>
<svg style="left:8px;top:525px;" width="22" height="22" viewBox="0 0 22 22"><rect x="2" y="2" width="18" height="18" fill="#7472c8"/><path d="M2 20L20 12V20Z" fill="#b4b2f0" opacity=".6"/><g transform="translate(2.500 2) scale(.84)"><path d="M3 17.500C7 16 14 17.500 20 20C13 21.500 5 21.500 3 17.500Z" fill="#8ed0f8" opacity=".9"/><path d="M18.500 2.500L11.500 11" stroke="#3c3c3c" stroke-width="4" stroke-linecap="round"/><path d="M17.800 2.300L11 10.500" stroke="#d4d4d4" stroke-width="1.300" stroke-linecap="round"/><path d="M9.500 9.500L13.500 13C12 17.500 7.500 19 3 17.500C5.500 15 6.500 12 9.500 9.500Z" fill="#f6f6f6" stroke="#444" stroke-width=".7"/><path d="M9.800 9.300L13.700 12.800" stroke="#777" stroke-width="1.400"/></g></svg>
<svg style="left:39px;top:525px;" width="22" height="22" viewBox="0 0 22 22"><g transform="translate(-1 0)"><path d="M3 17.500C7 16 14 17.500 20 20C13 21.500 5 21.500 3 17.500Z" fill="none" opacity=".9"/><path d="M18.500 2.500L11.500 11" stroke="#3c3c3c" stroke-width="4" stroke-linecap="round"/><path d="M17.800 2.300L11 10.500" stroke="#d4d4d4" stroke-width="1.300" stroke-linecap="round"/><path d="M9.500 9.500L13.500 13C12 17.500 7.500 19 3 17.500C5.500 15 6.500 12 9.500 9.500Z" fill="#f6f6f6" stroke="#444" stroke-width=".7"/><path d="M9.800 9.300L13.700 12.800" stroke="#777" stroke-width="1.400"/></g><path d="M9 19l2 -1.500l-2 -1.500M12.500 19.500l2 -1.500l-2 -1.500M16 20l2 -1.500l-2 -1.500M9 21.500l2 -1.500M12.500 22l2 -1.500M16 22.500l2 -1.500" stroke="#1a1a1a" stroke-width="1.400" fill="none"/></svg>
<div style="left:2px;top:551px;width:39px;height:39px;background:#7ecbec"></div>
<div style="left:4px;top:553px;width:35px;height:35px;background:#000"></div>
<div style="left:5px;top:554px;width:33px;height:33px;background:#fff"></div>
<div style="left:6px;top:555px;width:31px;height:31px;background:#001c43"></div>
<div style="left:28px;top:577px;width:39px;height:39px;background:#bccfde;border:1px solid #3a3a3c;clip-path:polygon(0 33%,33% 33%,33% 0,100% 0,100% 100%,0 100%)"></div>
<div style="left:2px;top:617px;width:66px;height:20px;border:1px solid #3a3a3c;background:repeating-conic-gradient(#fff 0 25%,#8c8c8c 0 50%) 0 0/10px 10px"></div>
<div style="left:70px;top:69px;width:206px;height:17px;background:linear-gradient(#4a4a4c,#39393b);border-top:1px solid #2e2e30"></div>
<div style="left:71px;top:70px;width:19px;height:16px;background:linear-gradient(#4c4c4e,#3c3c3e);border:1px solid #343436"></div>
<svg style="left:74px;top:73px;" width="13" height="9" viewBox="0 0 13 9"><path d="M0 0L4 4.5L0 9Z" fill="#8a8b8e"/><path d="M6 1H12M6 4.500H12M6 8H12" stroke="#8a8b8e" stroke-width="1.6"/></svg>
<div style="left:90px;top:71px;width:106px;height:16px;background:#6b6c70;border:1px solid #4a4a4c;border-bottom:none"></div>
<svg style="left:93px;top:72px;" width="9" height="17" viewBox="0 0 9 17"><path d="M4.500 0.500C2.500 4 1.500 7 2 10L3 13H6L7 10C7.500 7 6.500 4 4.500 0.500Z" fill="#d8d8d8" stroke="#1a1a1a" stroke-width="1"/><path d="M4.500 5V10" stroke="#1a1a1a" stroke-width="1"/><path d="M1.500 15.500H7.500" stroke="#111" stroke-width="2"/></svg>
<svg style="left:101px;top:74px;" width="11" height="15" viewBox="0 0 11 15"><path d="M1.500 0V14M1.500 2.500H5M1.500 7.500H5M1.500 12.500H5" stroke="#1a1a1a" stroke-width="1" fill="none"/><rect x="6.500" y="0.500" width="3" height="3" fill="#c8c8c8" stroke="#1a1a1a"/><rect x="6.500" y="5.500" width="3" height="3" fill="#c8c8c8" stroke="#1a1a1a"/><rect x="6.500" y="10.500" width="3" height="3" fill="#c8c8c8" stroke="#1a1a1a"/></svg>
<span class="t" style="left:115.0px;transform:scaleX(0.900);top:73.0px;font-size:10px;line-height:14px;color:#d8d8da;">サブツール[制御点]</span>
<div style="left:70px;top:91px;width:206px;height:1px;background:#39393b"></div>
<div style="left:70px;top:91px;width:1px;height:561px;background:#39393b"></div>
<div style="left:72px;top:93px;width:83px;height:24px;background:linear-gradient(#7d98a8,#5f7b8d);border:1px solid #1c2226;border-radius:3px"></div>
<svg style="left:75px;top:95px;" width="21" height="21" viewBox="0 0 21 21"><path d="M1.500 4.500L5.500 1.500H14.500V11.500L11 14.500H1.500Z" fill="#f4f4f4" stroke="#2a2a2a" stroke-width="1"/><path d="M1.500 4.500H11V14.500M11 4.500L14.500 1.500" fill="none" stroke="#5a5a5a" stroke-width="1"/><path d="M5.500 1.500V11.500H14.500M5.500 11.500L1.500 14.500" fill="none" stroke="#b0b0b0" stroke-width="1"/><path d="M12 9.500V17.500L13.800 16L15.300 19.500L17 18.800L15.500 15.300H18.300Z" fill="#111" stroke="#fff" stroke-width=".9"/></svg>
<span class="t" style="left:99.0px;transform:scaleX(0.972);top:96.5px;font-size:12px;line-height:16px;color:#ffffff;">制御点</span>
<div style="left:70px;top:119px;width:206px;height:1px;background:#39393b"></div>
<div style="left:71px;top:120px;width:191px;height:35px;background:linear-gradient(#7b96a6,#5f7b8d);border:1px solid #8aa4b4;border-top-color:#94aebd"></div>
<div style="left:198px;top:137px;width:63px;height:16px;background:#667f90"></div>
<svg style="left:74px;top:124px;" width="21" height="21" viewBox="0 0 21 21"><path d="M1.500 4.500L5.500 1.500H14.500V11.500L11 14.500H1.500Z" fill="#f4f4f4" stroke="#2a2a2a" stroke-width="1"/><path d="M1.500 4.500H11V14.500M11 4.500L14.500 1.500" fill="none" stroke="#5a5a5a" stroke-width="1"/><path d="M5.500 1.500V11.500H14.500M5.500 11.500L1.500 14.500" fill="none" stroke="#b0b0b0" stroke-width="1"/><path d="M12 9.500V17.500L13.800 16L15.300 19.500L17 18.800L15.500 15.300H18.300Z" fill="#111" stroke="#fff" stroke-width=".9"/></svg>
<div style="left:71px;top:155px;width:191px;height:1px;background:#39393b"></div>
<span class="t" style="left:208.0px;transform:scaleX(0.722);top:138.0px;font-size:12px;line-height:16px;color:#ffffff;">オブジェクト</span>
<svg style="left:74px;top:160px;" width="22" height="22" viewBox="0 0 22 22"><path d="M2.700 1.800H18.500M2.700 1.800V17.300" stroke="#2a2a2a" stroke-width="1" fill="none"/><circle cx="2.700" cy="1.800" r="1.500" fill="#fff"/><path d="M7.700 6.500L19.500 10.800L14 12L12.700 17.800Z" fill="#fff" stroke="#1a1a1a" stroke-width="1"/><path d="M7.700 6.500L12.700 17.800L13.500 11.600Z" fill="#222"/></svg>
<div style="left:71px;top:191px;width:191px;height:1px;background:#39393b"></div>
<span class="t" style="left:225.0px;transform:scaleX(0.972);top:174.0px;font-size:12px;line-height:16px;color:#ffffff;">制御点</span>
<svg style="left:74px;top:196px;" width="22" height="22" viewBox="0 0 22 22"><path d="M2.700 1.800H18.500M2.700 1.800V17.300" stroke="#2a2a2a" stroke-width="1" fill="none"/><circle cx="2.700" cy="1.800" r="1.500" fill="#fff"/><path d="M7.700 6.500L19.500 10.800L14 12L12.700 17.800Z" fill="#fff" stroke="#1a1a1a" stroke-width="1"/><path d="M7.700 6.500L12.700 17.800L13.500 11.600Z" fill="#222"/></svg>
<div style="left:71px;top:227px;width:191px;height:1px;background:#39393b"></div>
<span class="t" style="left:201.0px;transform:scaleX(0.983);top:210.0px;font-size:12px;line-height:16px;color:#ffffff;">制御点追加</span>
<svg style="left:74px;top:232px;" width="22" height="22" viewBox="0 0 22 22"><path d="M2.700 1.800H18.500M2.700 1.800V17.300" stroke="#2a2a2a" stroke-width="1" fill="none"/><circle cx="2.700" cy="1.800" r="1.500" fill="#fff"/><path d="M7.700 6.500L19.500 10.800L14 12L12.700 17.800Z" fill="#fff" stroke="#1a1a1a" stroke-width="1"/><path d="M7.700 6.500L12.700 17.800L13.500 11.600Z" fill="#222"/></svg>
<div style="left:71px;top:263px;width:191px;height:1px;background:#39393b"></div>
<span class="t" style="left:201.0px;transform:scaleX(0.983);top:246.0px;font-size:12px;line-height:16px;color:#ffffff;">制御点削除</span>
<svg style="left:74px;top:268px;" width="22" height="22" viewBox="0 0 22 22"><path d="M2.700 1.800H18.500M2.700 1.800V17.300" stroke="#2a2a2a" stroke-width="1" fill="none"/><circle cx="2.700" cy="1.800" r="1.500" fill="#fff"/><path d="M7.700 6.500L19.500 10.800L14 12L12.700 17.800Z" fill="#fff" stroke="#1a1a1a" stroke-width="1"/><path d="M7.700 6.500L12.700 17.800L13.500 11.600Z" fill="#222"/></svg>
<div style="left:71px;top:299px;width:191px;height:1px;background:#39393b"></div>
<span class="t" style="left:196.0px;transform:scaleX(0.889);top:282.0px;font-size:12px;line-height:16px;color:#ffffff;">角の切り替え</span>
<div style="left:262px;top:120px;width:1px;height:511px;background:#39393b"></div>
<div style="left:263px;top:120px;width:12px;height:511px;background:#5c5d5f;border-left:1px solid #4c4d4f;border-right:2px solid #747578;border-bottom:1px solid #8a8b8e"></div>
<div style="left:70px;top:631px;width:206px;height:1px;background:#39393b"></div>
<div style="left:275px;top:69px;width:1px;height:970px;background:#3e3e40"></div>
<svg style="left:239px;top:634px;" width="13" height="14" viewBox="0 0 13 14"><path d="M0.500 0.500H12.5V9L8 13.5H0.500Z" fill="url(#gPaper)" stroke="#111" stroke-width="1"/><path d="M12.5 9H8V13.5" fill="#bbb" stroke="#111" stroke-width="1"/></svg>
<svg style="left:259px;top:633px;" width="13" height="16" viewBox="0 0 13 16"><path d="M2.500 4C2.500 1 10.500 1 10.500 4" fill="none" stroke="#111" stroke-width="1.300"/><path d="M3.500 4.500C3.500 2.500 9.500 2.500 9.500 4.500" fill="none" stroke="#e8e8e8" stroke-width="1"/><path d="M0.500 5.500H12.500V7.500H0.500Z" fill="#fff" stroke="#111" stroke-width="1"/><path d="M1.500 7.500H11.500L10.500 14.500C9 15.800 4 15.800 2.500 14.500Z" fill="#fafafa" stroke="#111" stroke-width="1.200"/><path d="M4.500 8.500V14M6.500 8.500V14.500M8.500 8.500V14" stroke="#c0c0c0" stroke-width="1"/></svg>
<div style="left:70px;top:652px;width:206px;height:1px;background:#7a7b7e"></div>
<div style="left:70px;top:653px;width:206px;height:17px;background:linear-gradient(#4a4a4c,#39393b);border-top:1px solid #2e2e30"></div>
<div style="left:71px;top:654px;width:19px;height:16px;background:linear-gradient(#4c4c4e,#3c3c3e);border:1px solid #343436"></div>
<svg style="left:74px;top:657px;" width="13" height="9" viewBox="0 0 13 9"><path d="M0 0L4 4.5L0 9Z" fill="#8a8b8e"/><path d="M6 1H12M6 4.500H12M6 8H12" stroke="#8a8b8e" stroke-width="1.6"/></svg>
<div style="left:90px;top:655px;width:160px;height:16px;background:#6b6c70;border:1px solid #4a4a4c;border-bottom:none"></div>
<svg style="left:93px;top:657px;" width="9" height="17" viewBox="0 0 9 17"><path d="M4.500 0.500C2.500 4 1.500 7 2 10L3 13H6L7 10C7.500 7 6.500 4 4.500 0.500Z" fill="#d8d8d8" stroke="#1a1a1a" stroke-width="1"/><path d="M4.500 5V10" stroke="#1a1a1a" stroke-width="1"/><path d="M1.500 15.500H7.500" stroke="#111" stroke-width="2"/></svg>
<svg style="left:101px;top:660px;" width="10" height="10" viewBox="0 0 10 10"><circle cx="5" cy="5" r="3" fill="none" stroke="#111" stroke-width="2.600" stroke-dasharray="1.600 0.800"/><circle cx="5" cy="5" r="2.600" fill="#111"/><circle cx="5" cy="5" r="1" fill="#8a8b8e"/></svg>
<span class="t" style="left:113.0px;transform:scaleX(0.917);top:657.0px;font-size:10px;line-height:14px;color:#d8d8da;">ツールプロパティ[オブジェクト]</span>
<div style="left:70px;top:675px;width:206px;height:40px;border:1px solid #39393b;border-bottom:2px solid #1e1e20;background:#6b6c70"></div>
<span class="t" style="left:73.0px;transform:scaleX(0.722);top:674.5px;font-size:12px;line-height:16px;color:#ffffff;">オブジェクト</span>
<div style="left:257px;top:696px;width:16px;height:16px;border-radius:50%;background:#2e2e30"></div>
<div style="left:258px;top:697px;width:14px;height:14px;border-radius:50%;background:#b8b8ba"></div>
<svg style="left:259px;top:698px;" width="12" height="12" viewBox="0 0 12 12"><path d="M2 5C0.500 3.500 1 1 3 0.500L3.200 2.500L5 3L5.500 1C7 2 7.500 4 6 5.500L11.500 10.500L10.500 11.500L5 6.500C4 6.500 3 6 2 5Z" fill="#fff" stroke="#3a3a3c" stroke-width=".8"/></svg>
<div style="left:70px;top:716px;width:206px;height:301px;border:1px solid #39393b;border-top:none;background:#6b6c70"></div>
<div style="left:263px;top:717px;width:12px;height:299px;background:#5c5d5f;border-left:1px solid #4c4d4f;border-right:2px solid #747578;border-bottom:1px solid #8a8b8e"></div>
<div style="left:76px;top:730px;width:4px;height:1px;background:#808184"></div>
<div style="left:110px;top:730px;width:149px;height:1px;background:#808184"></div>
<span class="t" style="left:81.0px;transform:scaleX(1.041);top:721.5px;font-size:12px;line-height:16px;color:#ffffff;">操作</span>
<div style="left:87px;top:742px;width:173px;height:19px;background:linear-gradient(#77787c,#67686c);border:1px solid #4a4a4c;border-radius:3px;box-shadow:inset 0 1px 0 #8a8b8e"></div>
<span class="t" style="left:111.0px;transform:scaleX(0.864);top:743.5px;font-size:12px;line-height:16px;color:#ffffff;">選択可能なオブジェクト</span>
<svg style="left:247px;top:749px;" width="9" height="6" viewBox="0 0 9 6"><path d="M0 0H9L4.500 5Z" fill="#1e1e20"/></svg>
<svg style="left:237px;top:1020px;" width="16" height="16" viewBox="0 0 16 16"><path d="M14.5 8.0L13.5 11.4" stroke="#4e4f52" stroke-width="2"/><path d="M11.2 13.6L7.8 14.5" stroke="#4e4f52" stroke-width="2"/><path d="M4.8 13.6L2.3 11.1" stroke="#4e4f52" stroke-width="2"/><path d="M1.5 8.0L2.5 4.6" stroke="#4e4f52" stroke-width="2"/><path d="M4.7 2.4L8.2 1.5" stroke="#4e4f52" stroke-width="2"/><path d="M11.2 2.4L13.7 4.9" stroke="#4e4f52" stroke-width="2"/><path d="M8 0L11 3H5Z" fill="#4e4f52"/></svg>
<svg style="left:257px;top:1018px;" width="18" height="18" viewBox="0 0 18 18"><path d="M1 4C1 2.500 2.500 1.800 3.800 2.500V6L5.500 7.500V17H2.500V8.500C1.500 8 1 6 1 4Z" fill="url(#gMetalV)"/><path d="M6.800 5.500C6.800 3.500 8 2.300 9.500 1.800V5.500H13.500V1.800C15 2.300 16.200 3.500 16.200 5.500C16.200 7.500 14.800 8.600 13.500 9V17H9.500V9C8.200 8.600 6.800 7.500 6.800 5.500Z" fill="url(#gWrench)" stroke="#111" stroke-width="1.200"/></svg>
<svg width="0" height="0" style="left:0;top:0"><defs>
<filter id="tex" x="0" y="0" width="100%" height="100%" color-interpolation-filters="sRGB">
<feTurbulence type="fractalNoise" baseFrequency="0.42" numOctaves="3" seed="7" result="n"/>
<feColorMatrix in="n" type="matrix" values="2.6 0 0 0 -0.82  2.6 0 0 0 -0.82  2.6 0 0 0 -0.82  0 0 0 0 1" result="g"/>
<feComponentTransfer in="g"><feFuncR type="table" tableValues="0.16 0.46 0.74 0.99"/><feFuncG type="table" tableValues="0.19 0.49 0.76 0.99"/><feFuncB type="table" tableValues="0.30 0.66 0.88 1"/></feComponentTransfer>
</filter>
<filter id="texl" x="0" y="0" width="100%" height="100%" color-interpolation-filters="sRGB">
<feTurbulence type="fractalNoise" baseFrequency="0.42" numOctaves="3" seed="7" result="n"/>
<feColorMatrix in="n" type="matrix" values="2.6 0 0 0 -0.82  2.6 0 0 0 -0.82  2.6 0 0 0 -0.82  0 0 0 0 1" result="g"/>
<feComponentTransfer in="g"><feFuncR type="table" tableValues="0.44 0.63 0.84 0.99"/><feFuncG type="table" tableValues="0.46 0.65 0.85 0.99"/><feFuncB type="table" tableValues="0.60 0.80 0.93 1"/></feComponentTransfer>
</filter>
<radialGradient id="bspot"><stop offset="0" stop-color="#dfe6ff"/><stop offset="0.35" stop-color="#5878dc" stop-opacity=".6"/><stop offset="1" stop-color="#4f6fe0" stop-opacity="0"/></radialGradient>
<radialGradient id="dspot"><stop offset="0" stop-color="#1c2444" stop-opacity=".75"/><stop offset="1" stop-color="#1c2444" stop-opacity="0"/></radialGradient>
</defs></svg>
<div style="left:277px;top:74px;width:1011px;height:22px;background:#3c3c3e;border-bottom:1px solid #747578"></div>
<div style="left:277px;top:94px;width:1011px;height:1px;background:#29292b"></div>
<div style="left:278px;top:76px;width:98px;height:18px;background:linear-gradient(#646466,#58585a);border:1px solid #48484a;border-bottom:none"></div>
<span class="t" style="left:281.0px;transform:scaleX(0.966);top:76.5px;font-size:11px;line-height:15px;color:#b4b4b6;">blue light portal.</span>
<svg style="left:361px;top:80px;" width="9" height="9" viewBox="0 0 9 9"><path d="M1.5 1.5L7.5 7.5M7.5 1.5L1.5 7.5" stroke="#3e3e40" stroke-width="2.4"/></svg>
<div style="left:377px;top:76px;width:99px;height:19px;background:linear-gradient(#7e7f82,#6e6f72);border:1px solid #58585a;border-bottom:none"></div>
<span class="t" style="left:381.0px;transform:scaleX(0.886);top:76.5px;font-size:11px;line-height:15px;color:#f0f0f0;">新規キャンバス*</span>
<div style="left:463px;top:81px;width:7px;height:7px;border-radius:50%;background:#2e2e30"></div>
<div style="left:1277px;top:75px;width:11px;height:19px;background:linear-gradient(#6e6f72,#5a5a5c);border:1px solid #88898c;border-radius:2px"></div>
<svg style="left:1279px;top:82px;" width="7" height="5" viewBox="0 0 7 5"><path d="M0 0H7L3.5 4Z" fill="#222"/></svg>
<div style="left:276px;top:96px;width:1000px;height:930px;background:#313131;border-top:1px solid #222;border-left:1px solid #5a5b5d"></div>
<div style="left:277px;top:74px;width:1px;height:965px;background:#232325"></div>
<div style="left:278px;top:96px;width:1px;height:930px;background:#5a5b5d"></div>
<div style="left:279px;top:96px;width:1px;height:930px;background:#202022"></div>
<div style="left:526px;top:309px;width:502px;height:502px;background:#262626"></div>
<div style="left:527px;top:310px;width:500px;height:500px;background:#fff"></div>
<div style="left:1276px;top:96px;width:12px;height:930px;background:#58585a;border-left:1px solid #6e6f72"></div>
<div style="left:1277px;top:98px;width:11px;height:11px;background:#6b6c70;border:1px solid #8a8b8e;border-radius:2px"></div>
<svg style="left:1279px;top:101px;" width="7" height="5" viewBox="0 0 7 5"><path d="M0 4H7L3.5 0Z" fill="#2a2a2c"/></svg>
<div style="left:1277px;top:1015px;width:11px;height:11px;background:#6b6c70;border:1px solid #8a8b8e;border-radius:2px"></div>
<svg style="left:1279px;top:1018px;" width="7" height="5" viewBox="0 0 7 5"><path d="M0 0H7L3.5 4Z" fill="#2a2a2c"/></svg>
<div style="left:1277px;top:340px;width:11px;height:442px;background:linear-gradient(90deg,#77787b,#67686b);border:1px solid #8a8b8e;border-radius:2px"></div>
<div style="left:1280px;top:558px;width:5px;height:1px;background:#3a3a3c"></div>
<div style="left:1280px;top:560px;width:5px;height:1px;background:#3a3a3c"></div>
<div style="left:1280px;top:562px;width:5px;height:1px;background:#3a3a3c"></div>
<div style="left:278px;top:1026px;width:1010px;height:13px;background:#5c5c5e"></div>
<div style="left:281px;top:1027px;width:55px;height:11px;background:linear-gradient(172deg,#303030 52%,#6e6f72 54%)"></div>
<div style="left:340px;top:1027px;width:39px;height:11px;background:linear-gradient(172deg,#6e6f72 46%,#303030 50%)"></div>
<span class="t" style="left:283.0px;transform:scaleX(0.872);top:1025.0px;font-size:11px;line-height:15px;color:#ffffff;">100.0</span>
<svg style="left:383px;top:1027px;" width="12" height="12" viewBox="0 0 12 12"><path d="M7.500 7.500L11 11" stroke="#222" stroke-width="1.800"/><circle cx="5" cy="5.500" r="4.300" fill="#f4f4f4" stroke="#333" stroke-width="1"/><path d="M2.500 5.500H7.500" stroke="#111" stroke-width="1.600"/></svg>
<svg style="left:403px;top:1027px;" width="12" height="12" viewBox="0 0 12 12"><path d="M7.500 7.500L11 11" stroke="#222" stroke-width="1.800"/><circle cx="5" cy="5.500" r="4.300" fill="#f4f4f4" stroke="#333" stroke-width="1"/><path d="M2.500 5.500H7.500" stroke="#111" stroke-width="1.600"/><path d="M5 3V8" stroke="#111" stroke-width="1.600"/></svg>
<div style="left:424px;top:1027px;width:13px;height:11px;background:#1e1e20"></div>
<div style="left:427px;top:1029px;width:7px;height:7px;border:1px solid #88898c"></div>
<svg style="left:546px;top:1027px;" width="12" height="11" viewBox="0 0 12 11"><path d="M3 10C-1 3 9 -1 10.500 6.500" fill="none" stroke="#1e1e20" stroke-width="2"/><path d="M7.500 5.500H12.500L10.500 10Z" fill="#1e1e20" transform="rotate(0)"/></svg>
<svg style="left:565px;top:1027px;" width="12" height="11" viewBox="0 0 12 11"><path d="M9 10C13 3 3 -1 1.500 6.500" fill="none" stroke="#1e1e20" stroke-width="2"/><path d="M4.500 5.500H-0.500L1.500 10Z" fill="#1e1e20"/></svg>
<svg style="left:584px;top:1027px;" width="12" height="11" viewBox="0 0 12 11"><circle cx="6" cy="5.500" r="4" fill="none" stroke="#4e4f52" stroke-width="2.400" stroke-dasharray="2 1.400"/></svg>
<div style="left:441px;top:1027px;width:47px;height:11px;background:#303030"></div>
<svg style="left:441px;top:1027px;" width="47" height="11" viewBox="0 0 47 11"><path d="M0 0H47V5C40 5 42 11 34 11H22C16 11 14 0 0 0Z" fill="#6e6f72" opacity=".0"/><path d="M20 5 C28 5 26 11 34 11 H40 C46 11 44 3 47 3 V11 H20Z" fill="#6e6f72"/></svg>
<span class="t" style="left:446.0px;transform:scaleX(0.850);top:1025.0px;font-size:11px;line-height:15px;color:#ffffff;">0.0</span>
<div style="left:492px;top:1027px;width:47px;height:11px;background:#303030"></div>
<svg style="left:492px;top:1027px;" width="47" height="11" viewBox="0 0 47 11"><path d="M0 0H20L0 6Z M27 0H47V11Z" fill="#6e6f72"/></svg>
<div style="left:601px;top:1027px;width:675px;height:11px;background:#505052;border-top:1px solid #444"></div>
<div style="left:601px;top:1027px;width:11px;height:11px;background:#6b6c70;border:1px solid #8a8b8e;border-radius:2px"></div>
<svg style="left:604px;top:1029px;" width="5" height="7" viewBox="0 0 5 7"><path d="M4 0V7L0 3.5Z" fill="#2a2a2c"/></svg>
<div style="left:1265px;top:1027px;width:11px;height:11px;background:#6b6c70;border:1px solid #8a8b8e;border-radius:2px"></div>
<svg style="left:1268px;top:1029px;" width="5" height="7" viewBox="0 0 5 7"><path d="M0 0V7L4 3.5Z" fill="#2a2a2c"/></svg>
<div style="left:776px;top:1027px;width:323px;height:11px;background:linear-gradient(#77787b,#65666a);border:1px solid #8a8b8e;border-radius:2px"></div>
<div style="left:934px;top:1030px;width:1px;height:5px;background:#3a3a3c"></div>
<div style="left:936px;top:1030px;width:1px;height:5px;background:#3a3a3c"></div>
<div style="left:938px;top:1030px;width:1px;height:5px;background:#3a3a3c"></div>
<div style="left:1276px;top:1026px;width:12px;height:13px;background:#6b6c70"></div>
<div style="left:1288px;top:48px;width:1px;height:991px;background:#4a4a4c"></div>
<div style="left:1289px;top:69px;width:1px;height:970px;background:#7a7b7e"></div>
<div style="left:1290px;top:69px;width:331px;height:17px;background:linear-gradient(#4a4a4c,#39393b);border-top:1px solid #2e2e30"></div>
<div style="left:1291px;top:70px;width:19px;height:16px;background:linear-gradient(#4c4c4e,#3c3c3e);border:1px solid #343436"></div>
<svg style="left:1294px;top:73px;" width="13" height="9" viewBox="0 0 13 9"><path d="M0 0L4 4.5L0 9Z" fill="#8a8b8e"/><path d="M6 1H12M6 4.500H12M6 8H12" stroke="#8a8b8e" stroke-width="1.6"/></svg>
<div style="left:1310px;top:71px;width:90px;height:16px;background:#6b6c70;border:1px solid #4a4a4c;border-bottom:none"></div>
<svg style="left:1314px;top:72px;" width="17" height="17" viewBox="0 0 17 17"><path d="M8.500 0.5L16.500 3.5L8.500 6.5L0.500 3.5Z" fill="#9a9a9a"/><path d="M0.500 3.5L8.500 0.5L16.500 3.5" fill="none" stroke="#111" stroke-width="1.300"/><path d="M8.500 5.0L16.500 8.0L8.500 11.0L0.500 8.0Z" fill="#e0e0e0"/><path d="M0.500 8.0L8.500 5.0L16.500 8.0" fill="none" stroke="#111" stroke-width="1.300"/><path d="M8.500 9.5L16.500 12.5L8.500 15.5L0.500 12.5Z" fill="#ffffff"/><path d="M0.500 12.5L8.500 9.5L16.500 12.5" fill="none" stroke="#111" stroke-width="1.300"/><path d="M0.500 12.500L8.500 15.500L16.500 12.500" fill="none" stroke="#d8d8d8" stroke-width="1"/></svg>
<span class="t" style="left:1335.0px;transform:scaleX(0.915);top:73.0px;font-size:10px;line-height:14px;color:#b4b4b6;">素材[自作素材]</span>
<div style="left:1291px;top:91px;width:127px;height:438px;border:1px solid #39393b;background:#6b6c70"></div>
<div style="left:1399px;top:92px;width:7px;height:426px;background:linear-gradient(90deg,#6b6c70,#606164)"></div>
<div style="left:1406px;top:92px;width:11px;height:426px;background:#5c5d5f;border-left:1px solid #4c4d4f;border-right:2px solid #747578;border-bottom:1px solid #8a8b8e"></div>
<div style="left:1294px;top:120px;width:108px;height:23px;background:linear-gradient(#7590a1,#64808f);border-radius:2px"></div>
<svg style="left:1299px;top:104px;" width="10" height="7" viewBox="0 0 10 7"><path d="M0 0H10L5 6.500Z" fill="#f4f4f4"/></svg>
<div style="left:1313px;top:101px;width:11px;height:11px;border-radius:50%;background:radial-gradient(circle at 40% 35%,#8a8a8a,#1a1a1a 70%);border:1px solid #1a1a1a"></div>
<span class="t" style="left:1330.0px;transform:scaleX(0.958);top:98.0px;font-size:12px;line-height:16px;color:#ffffff;">素材</span>
<svg style="left:1321px;top:124.5px;" width="15" height="13" viewBox="0 0 15 13"><path d="M0.500 1.500H5L6.500 3H13.500V12.500H0.500Z" fill="url(#gPaper)" stroke="#333" stroke-width="1"/></svg>
<span class="t" style="left:1340.0px;transform:scaleX(0.979);top:123.5px;font-size:12px;line-height:16px;color:#ffffff;">自作素材</span>
<svg style="left:1313px;top:152.5px;" width="6" height="10" viewBox="0 0 6 10"><path d="M0 0V10L5.500 5Z" fill="#f4f4f4"/></svg>
<svg style="left:1322px;top:150.5px;" width="15" height="15" viewBox="0 0 15 15"><rect width="15" height="15" fill="#3aa0e4"/><path d="M0 0C6 4 9 4 15 0C11 6 11 9 15 15C9 11 6 11 0 15C4 9 4 6 0 0Z" fill="#f6ea6a"/><circle cx="7.500" cy="7.500" r="2" fill="#9cd08a"/></svg>
<span class="t" style="left:1340.0px;transform:scaleX(0.756);top:149.5px;font-size:12px;line-height:16px;color:#ffffff;">カラーパターン</span>
<svg style="left:1313px;top:178.5px;" width="6" height="10" viewBox="0 0 6 10"><path d="M0 0V10L5.500 5Z" fill="#f4f4f4"/></svg>
<svg style="left:1322px;top:176.5px;" width="15" height="15" viewBox="0 0 15 15"><rect width="15" height="15" fill="#5a5a5c"/><path d="M0 0C6 4 9 4 15 0C11 6 11 9 15 15C9 11 6 11 0 15C4 9 4 6 0 0Z" fill="#a8a8aa"/><circle cx="7.500" cy="7.500" r="2" fill="#555"/></svg>
<span class="t" style="left:1340.0px;transform:scaleX(0.854);top:175.5px;font-size:12px;line-height:16px;color:#ffffff;">単色パターン</span>
<svg style="left:1313px;top:204.5px;" width="6" height="10" viewBox="0 0 6 10"><path d="M0 0V10L5.500 5Z" fill="#f4f4f4"/></svg>
<svg style="left:1322px;top:202.5px;" width="13" height="15" viewBox="0 0 13 15"><rect x="0.500" y="0.500" width="12" height="14" fill="#fff" stroke="#222"/><path d="M6.500 0.500V6.500M0.500 6.500H12.500M0.500 9.500H12.500" stroke="#222" stroke-width="1.200"/></svg>
<span class="t" style="left:1340.0px;transform:scaleX(0.979);top:201.5px;font-size:12px;line-height:16px;color:#ffffff;">漫画素材</span>
<svg style="left:1313px;top:230.5px;" width="6" height="10" viewBox="0 0 6 10"><path d="M0 0V10L5.500 5Z" fill="#f4f4f4"/></svg>
<svg style="left:1322px;top:228.5px;" width="14" height="14" viewBox="0 0 14 14"><rect x="0.500" y="0.500" width="13" height="13" fill="#fff" stroke="#222"/><path d="M1.500 11.500L5 4L7.500 8L9.500 5.500L12.500 11.500Z" fill="#111"/></svg>
<span class="t" style="left:1340.0px;transform:scaleX(0.979);top:227.5px;font-size:12px;line-height:16px;color:#ffffff;">画像素材</span>
<svg style="left:1313px;top:256px;" width="6" height="10" viewBox="0 0 6 10"><path d="M0 0V10L5.500 5Z" fill="#f4f4f4"/></svg>
<svg style="left:1322px;top:254px;" width="15" height="15" viewBox="0 0 15 15"><path d="M0.500 4.500L4 1.500H14.500V11L11 14.500H0.500Z" fill="#f0f0f0" stroke="#222" stroke-width="1"/><path d="M0.500 4.500H11V14.500M11 4.500L14.500 1.500" fill="none" stroke="#444" stroke-width="1"/><path d="M4 1.500V11H14.500M4 11L0.500 14.500" stroke="#aaa" stroke-width=".8" fill="none"/></svg>
<span class="t" style="left:1340.0px;transform:scaleX(0.847);top:253.0px;font-size:12px;line-height:16px;color:#ffffff;">3D</span>
<svg style="left:1313px;top:282.5px;" width="6" height="10" viewBox="0 0 6 10"><path d="M0 0V10L5.500 5Z" fill="#f4f4f4"/></svg>
<svg style="left:1322px;top:279.5px;" width="16" height="16" viewBox="0 0 16 16"><path d="M0.500 5.500H5L6.500 7H13.500V15.500H0.500Z" fill="url(#gPaper)" stroke="#333" stroke-width="1"/><path d="M10.500 0V7M7.500 5.500L10.500 9.500L13.500 5.500Z" fill="#111" stroke="#111" stroke-width="1.600"/></svg>
<span class="t" style="left:1340.0px;transform:scaleX(0.764);top:279.5px;font-size:12px;line-height:16px;color:#ffffff;">ダウンロード</span>
<div style="left:1292px;top:518px;width:114px;height:11px;background:#505052"></div>
<div style="left:1292px;top:518px;width:11px;height:11px;background:#6b6c70;border:1px solid #8a8b8e;border-radius:2px"></div>
<svg style="left:1295px;top:520px;" width="5" height="7" viewBox="0 0 5 7"><path d="M4 0V7L0 3.500Z" fill="#2a2a2c"/></svg>
<div style="left:1394px;top:518px;width:11px;height:11px;background:#6b6c70;border:1px solid #8a8b8e;border-radius:2px"></div>
<svg style="left:1397px;top:520px;" width="5" height="7" viewBox="0 0 5 7"><path d="M0 0V7L4 3.500Z" fill="#2a2a2c"/></svg>
<div style="left:1304px;top:518px;width:74px;height:11px;background:linear-gradient(#77787b,#65666a);border:1px solid #8a8b8e;border-radius:2px"></div>
<div style="left:1337px;top:521px;width:1px;height:5px;background:#3a3a3c"></div>
<div style="left:1339px;top:521px;width:1px;height:5px;background:#3a3a3c"></div>
<div style="left:1341px;top:521px;width:1px;height:5px;background:#3a3a3c"></div>
<div style="left:1406px;top:518px;width:11px;height:11px;background:#77787b;border:1px solid #8a8b8e"></div>
<div style="left:1347px;top:531px;width:1px;height:1px;background:#3a3a3c"></div>
<div style="left:1350px;top:531px;width:1px;height:1px;background:#3a3a3c"></div>
<div style="left:1353px;top:531px;width:1px;height:1px;background:#3a3a3c"></div>
<div style="left:1356px;top:531px;width:1px;height:1px;background:#3a3a3c"></div>
<div style="left:1359px;top:531px;width:1px;height:1px;background:#3a3a3c"></div>
<div style="left:1291px;top:535px;width:127px;height:23px;border:1px solid #39393b;background:#6b6c70"></div>
<svg style="left:1296px;top:538px;" width="15" height="15" viewBox="0 0 15 15"><path d="M8.500 8.500L13.500 13.500" stroke="#1e1e1e" stroke-width="2.600" stroke-linecap="round"/><circle cx="6" cy="6" r="5" fill="#fafafa" stroke="#9a9a9a" stroke-width="1"/></svg>
<span class="t" style="left:1317.0px;transform:scaleX(1.058);top:537.5px;font-size:11px;line-height:15px;color:#ffffff;">seamless texture</span>
<div style="left:1291px;top:560px;width:127px;height:267px;border:1px solid #39393b;background:#6b6c70"></div>
<div style="left:1406px;top:561px;width:11px;height:265px;background:#5e5e61;border-left:1px solid #505052"></div>
<div style="left:1406px;top:561px;width:11px;height:11px;background:#6b6c70;border:1px solid #8a8b8e;border-radius:2px"></div>
<svg style="left:1408px;top:564px;" width="7" height="5" viewBox="0 0 7 5"><path d="M0 4H7L3.500 0Z" fill="#2a2a2c"/></svg>
<div style="left:1406px;top:815px;width:11px;height:11px;background:#6b6c70;border:1px solid #8a8b8e;border-radius:2px"></div>
<svg style="left:1408px;top:818px;" width="7" height="5" viewBox="0 0 7 5"><path d="M0 0H7L3.500 4Z" fill="#2a2a2c"/></svg>
<div style="left:1406px;top:573px;width:11px;height:58px;background:linear-gradient(90deg,#77787b,#67686b);border:1px solid #8a8b8e;border-radius:2px"></div>
<div style="left:1409px;top:617px;width:5px;height:1px;background:#3a3a3c"></div>
<div style="left:1409px;top:619px;width:5px;height:1px;background:#3a3a3c"></div>
<div style="left:1409px;top:621px;width:5px;height:1px;background:#3a3a3c"></div>
<div style="left:1294px;top:566px;width:63px;height:19px;background:linear-gradient(#c0c0c0,#aeaeae);clip-path:polygon(3px 0,100% 0,100% 100%,3px 100%,0 70%,0 30%)"></div>
<span class="t" style="left:1310.0px;transform:scaleX(0.968);top:567.5px;font-size:12px;line-height:16px;color:#000000;">gothic</span>
<div style="left:1294px;top:591px;width:80px;height:19px;background:#ffffff;clip-path:polygon(3px 0,100% 0,100% 100%,3px 100%,0 70%,0 30%)"></div>
<span class="t" style="left:1310.0px;top:592.5px;font-size:12px;line-height:16px;color:#000000;">画像素材</span>
<div style="left:1294px;top:616px;width:63px;height:19px;background:linear-gradient(#c0c0c0,#aeaeae);clip-path:polygon(3px 0,100% 0,100% 100%,3px 100%,0 70%,0 30%)"></div>
<span class="t" style="left:1310.0px;transform:scaleX(0.750);top:617.5px;font-size:12px;line-height:16px;color:#000000;">ゴシック</span>
<div style="left:1294px;top:715px;width:97px;height:19px;background:linear-gradient(#c0c0c0,#aeaeae);clip-path:polygon(3px 0,100% 0,100% 100%,3px 100%,0 70%,0 30%)"></div>
<span class="t" style="left:1310.0px;transform:scaleX(0.812);top:716.5px;font-size:12px;line-height:16px;color:#000000;">スワールパーツ</span>
<div style="left:1294px;top:740px;width:79px;height:19px;background:linear-gradient(#c0c0c0,#aeaeae);clip-path:polygon(3px 0,100% 0,100% 100%,3px 100%,0 70%,0 30%)"></div>
<span class="t" style="left:1310.0px;transform:scaleX(0.870);top:741.5px;font-size:12px;line-height:16px;color:#000000;">ブラシ形状</span>
<div style="left:1294px;top:765px;width:63px;height:19px;background:linear-gradient(#c0c0c0,#aeaeae);clip-path:polygon(3px 0,100% 0,100% 100%,3px 100%,0 70%,0 30%)"></div>
<span class="t" style="left:1310.0px;top:766.5px;font-size:12px;line-height:16px;color:#000000;">百合紋</span>
<div style="left:1294px;top:790px;width:63px;height:19px;background:linear-gradient(#c0c0c0,#aeaeae);clip-path:polygon(3px 0,100% 0,100% 100%,3px 100%,0 70%,0 30%)"></div>
<span class="t" style="left:1310.0px;top:791.5px;font-size:12px;line-height:16px;color:#000000;">厚底靴</span>
<div style="left:1294px;top:815px;width:96px;height:11px;overflow:hidden;"><div style="left:0;top:0;width:45px;height:19px;background:linear-gradient(#c0c0c0,#aeaeae);clip-path:polygon(3px 0,100% 0,100% 100%,3px 100%,0 70%,0 30%)"></div><div style="left:50px;top:0;width:45px;height:19px;background:linear-gradient(#c0c0c0,#aeaeae);clip-path:polygon(3px 0,100% 0,100% 100%,3px 100%,0 70%,0 30%)"></div><span class="t" style="left:14px;top:2px;font-size:12px;line-height:16px;color:#000;transform:scaleX(.92)">定規</span><span class="t" style="left:69px;top:2px;font-size:12px;line-height:16px;color:#000">丸</span></div>
<div style="left:1422px;top:91px;width:198px;height:736px;border:1px solid #39393b;background:#6b6c70"></div>
<div style="left:1607px;top:92px;width:12px;height:734px;background:#5c5d5f;border-left:1px solid #4c4d4f;border-right:2px solid #747578;border-bottom:1px solid #8a8b8e"></div>
<div style="left:1423px;top:92px;width:184px;height:126px;background:linear-gradient(#7da1b5,#6b8fa3);border:1px solid #86a8bb"></div>
<svg style="left:1467px;top:95px;overflow:hidden;" width="96" height="96" viewBox="0 0 96 96"><rect width="96" height="96" filter="url(#tex)"/><g opacity="1"><circle cx="48.0" cy="48.0" r="9.0" fill="url(#bspot)"/><circle cx="75.7" cy="59.5" r="6.0" fill="url(#bspot)" opacity=".8"/><circle cx="59.5" cy="75.7" r="6.0" fill="url(#bspot)" opacity=".8"/><circle cx="36.5" cy="75.7" r="6.0" fill="url(#bspot)" opacity=".8"/><circle cx="20.3" cy="59.5" r="6.0" fill="url(#bspot)" opacity=".8"/><circle cx="20.3" cy="36.5" r="6.0" fill="url(#bspot)" opacity=".8"/><circle cx="36.5" cy="20.3" r="6.0" fill="url(#bspot)" opacity=".8"/><circle cx="59.5" cy="20.3" r="6.0" fill="url(#bspot)" opacity=".8"/><circle cx="75.7" cy="36.5" r="6.0" fill="url(#bspot)" opacity=".8"/><circle cx="65.0" cy="48.0" r="8.0" fill="url(#dspot)"/><circle cx="48.0" cy="65.0" r="8.0" fill="url(#dspot)"/><circle cx="31.0" cy="48.0" r="8.0" fill="url(#dspot)"/><circle cx="48.0" cy="31.0" r="8.0" fill="url(#dspot)"/><circle cx="12.0" cy="12.0" r="7.0" fill="url(#dspot)"/><circle cx="84.0" cy="12.0" r="7.0" fill="url(#dspot)"/><circle cx="12.0" cy="84.0" r="7.0" fill="url(#dspot)"/><circle cx="84.0" cy="84.0" r="7.0" fill="url(#dspot)"/></g><path d="M8 12.5H17M12.5 8V17" stroke="#fff" stroke-width="1"/><path d="M80 12.5H89M84.5 8V17" stroke="#fff" stroke-width="1"/><path d="M8 84.5H17M12.5 80V89" stroke="#fff" stroke-width="1"/><path d="M80 84.5H89M84.5 80V89" stroke="#fff" stroke-width="1"/></svg>
<span class="t" style="left:1474.5px;transform:scaleX(1.072);top:195.5px;font-size:11px;line-height:15px;color:#ffffff;">blue light portal</span>
<span class="t" style="left:1435.0px;transform:scaleX(0.879);top:235.5px;font-size:12px;line-height:16px;color:#ffffff;">フォルダー内の素材をすべて表示</span>
<div style="left:1448px;top:829px;width:1px;height:1px;background:#3a3a3c"></div>
<div style="left:1451px;top:829px;width:1px;height:1px;background:#3a3a3c"></div>
<div style="left:1454px;top:829px;width:1px;height:1px;background:#3a3a3c"></div>
<div style="left:1457px;top:829px;width:1px;height:1px;background:#3a3a3c"></div>
<div style="left:1460px;top:829px;width:1px;height:1px;background:#3a3a3c"></div>
<div style="left:1419px;top:452px;width:1px;height:1px;background:#3a3a3c"></div>
<div style="left:1419px;top:455px;width:1px;height:1px;background:#3a3a3c"></div>
<div style="left:1419px;top:458px;width:1px;height:1px;background:#3a3a3c"></div>
<div style="left:1419px;top:461px;width:1px;height:1px;background:#3a3a3c"></div>
<div style="left:1419px;top:464px;width:1px;height:1px;background:#3a3a3c"></div>
<div style="left:1292px;top:841px;width:98px;height:90px;background:#1e1e20"></div>
<svg style="left:1293px;top:842px;overflow:hidden;" width="96" height="88" viewBox="0 0 96 88"><rect width="96" height="88" filter="url(#tex)"/><g opacity="1"><circle cx="48.0" cy="44.0" r="9.0" fill="url(#bspot)"/><circle cx="75.7" cy="54.5" r="6.0" fill="url(#bspot)" opacity=".8"/><circle cx="59.5" cy="69.4" r="6.0" fill="url(#bspot)" opacity=".8"/><circle cx="36.5" cy="69.4" r="6.0" fill="url(#bspot)" opacity=".8"/><circle cx="20.3" cy="54.5" r="6.0" fill="url(#bspot)" opacity=".8"/><circle cx="20.3" cy="33.5" r="6.0" fill="url(#bspot)" opacity=".8"/><circle cx="36.5" cy="18.6" r="6.0" fill="url(#bspot)" opacity=".8"/><circle cx="59.5" cy="18.6" r="6.0" fill="url(#bspot)" opacity=".8"/><circle cx="75.7" cy="33.5" r="6.0" fill="url(#bspot)" opacity=".8"/><circle cx="65.0" cy="44.0" r="8.0" fill="url(#dspot)"/><circle cx="48.0" cy="59.6" r="8.0" fill="url(#dspot)"/><circle cx="31.0" cy="44.0" r="8.0" fill="url(#dspot)"/><circle cx="48.0" cy="28.4" r="8.0" fill="url(#dspot)"/><circle cx="12.0" cy="11.0" r="7.0" fill="url(#dspot)"/><circle cx="84.0" cy="11.0" r="7.0" fill="url(#dspot)"/><circle cx="12.0" cy="77.0" r="7.0" fill="url(#dspot)"/><circle cx="84.0" cy="77.0" r="7.0" fill="url(#dspot)"/></g><path d="M8 11.5H17M12.5 7V16" stroke="#fff" stroke-width="1"/><path d="M80 11.5H89M84.5 7V16" stroke="#fff" stroke-width="1"/><path d="M8 77.5H17M12.5 73V82" stroke="#fff" stroke-width="1"/><path d="M80 77.5H89M84.5 73V82" stroke="#fff" stroke-width="1"/></svg>
<span class="t" style="left:1396.0px;transform:scaleX(1.072);top:840.5px;font-size:11px;line-height:15px;color:#ffffff;">blue light portal</span>
<span class="t" style="left:1396.0px;top:860.0px;font-size:12px;line-height:16px;color:#ffffff;">種類 : 画像素材</span>
<span class="t" style="left:1396.0px;transform:scaleX(0.988);top:880.5px;font-size:11px;line-height:15px;color:#ffffff;">タグ : seamless_texture</span>
<span class="t" style="left:1396.0px;transform:scaleX(0.890);top:899.5px;font-size:12px;line-height:16px;color:#ffffff;">データタグ : 画像素材</span>
<div style="left:1396px;top:922px;width:15px;height:15px;background:linear-gradient(#7c7d80,#6b6c70);border:1px solid #505153;border-radius:2px"></div>
<span class="t" style="left:1416.0px;transform:scaleX(0.823);top:921.0px;font-size:12px;line-height:16px;color:#ffffff;">トーン化</span>
<div style="left:1290px;top:999px;width:331px;height:1px;background:#39393b"></div>
<svg style="left:1290px;top:1002px;" width="16" height="16" viewBox="0 0 16 16"><path d="M3.500 14.500V6.500H8L9.500 8H15.500V14.500Z" fill="url(#gPaper)" stroke="#333" stroke-width="1"/><path d="M2.500 0V5M0 2.500H5M0.800 0.800L4.200 4.200M4.200 0.800L0.800 4.200" stroke="#111" stroke-width=".8"/></svg>
<svg style="left:1310px;top:1002px;" width="16" height="16" viewBox="0 0 16 16"><path d="M3.500 14.500V6.500H8L9.500 8H15.500V14.500Z" fill="url(#gPaper)" stroke="#333" stroke-width="1"/><path d="M8 10L9 7L14 1.500L16 3.500L11 9Z" fill="#3a9a3a" stroke="#222" stroke-width=".7"/><path d="M8 10L9 7.500L10.500 9Z" fill="#f8e0a0"/></svg>
<svg style="left:1330px;top:1001px;" width="16" height="16" viewBox="0 0 16 16"><path d="M3.500 14.500V6.500H8L9.500 8H15.500V14.500Z" fill="url(#gPaper)" stroke="#333" stroke-width="1"/><g transform="translate(9 6.500) scale(.62)"><path d="M2.500 4C2.500 1 10.500 1 10.500 4" fill="none" stroke="#111" stroke-width="1.300"/><path d="M3.500 4.500C3.500 2.500 9.500 2.500 9.500 4.500" fill="none" stroke="#e8e8e8" stroke-width="1"/><path d="M0.500 5.500H12.500V7.500H0.500Z" fill="#fff" stroke="#111" stroke-width="1"/><path d="M1.500 7.500H11.500L10.500 14.500C9 15.800 4 15.800 2.500 14.500Z" fill="#fafafa" stroke="#111" stroke-width="1.200"/><path d="M4.500 8.500V14M6.500 8.500V14.500M8.500 8.500V14" stroke="#c0c0c0" stroke-width="1"/></g></svg>
<div style="left:1431px;top:1008px;width:10px;height:9px;background:#2a2a2c"></div>
<div style="left:1428px;top:1004px;width:11px;height:11px;background:#fff;border:1px solid #222"></div>
<svg style="left:1429px;top:1001px;" width="13" height="13" viewBox="0 0 13 13"><path d="M1.500 6.500L4.500 10L11.500 0.500" fill="none" stroke="#111" stroke-width="2"/></svg>
<div style="left:1444px;top:1001px;width:20px;height:19px;background:#58595c;border:1px solid #7a7b7e;border-radius:3px"></div>
<svg style="left:1447px;top:1004px;" width="15" height="13" viewBox="0 0 15 13"><rect x="0.500" y="0.500" width="14" height="12" fill="#f4f4f4" stroke="#ddd"/><rect x="2" y="2" width="4" height="4" fill="#444"/><path d="M7.500 3H13M7.500 6H13M2 9H13" stroke="#666" stroke-width="1.200"/></svg>
<div style="left:1465px;top:1001px;width:19px;height:19px;background:#5e5f62;border:1px solid #6e6f72;border-radius:3px"></div>
<svg style="left:1468px;top:1003px;" width="13" height="14" viewBox="0 0 13 14"><rect x="0" y="0" width="5.500" height="5.500" fill="#2e2e30"/><rect x="7.500" y="0" width="5.500" height="5.500" fill="#2e2e30"/><rect x="0" y="8" width="5.500" height="5.500" fill="#2e2e30"/><rect x="7.500" y="8" width="5.500" height="5.500" fill="#2e2e30"/></svg>
<svg style="left:1490px;top:1005px;" width="9" height="9" viewBox="0 0 9 9"><rect x="0" y="0" width="3" height="3" fill="#2e2e30"/><rect x="5.500" y="0" width="3" height="3" fill="#2e2e30"/><rect x="0" y="5.500" width="3" height="3" fill="#2e2e30"/><rect x="5.500" y="5.500" width="3" height="3" fill="#2e2e30"/></svg>
<svg style="left:1508px;top:1003px;" width="13" height="13" viewBox="0 0 13 13"><rect x="0" y="0" width="4.500" height="4.500" fill="#2e2e30"/><rect x="0" y="7" width="4.500" height="4.500" fill="#2e2e30"/><path d="M7 2.500H12M7 9.500H12" stroke="#2e2e30" stroke-width="1"/></svg>
<div style="left:1529px;top:1001px;width:1px;height:19px;background:#525355"></div>
<div style="left:1530px;top:1001px;width:1px;height:19px;background:#7c7d80"></div>
<svg style="left:1534px;top:1002px;" width="16" height="16" viewBox="0 0 16 16"><rect x="1" y="5" width="9" height="10" fill="#c8c8c8" stroke="#222" stroke-width="1"/><path d="M3.500 5C3.500 2 4 0.500 5.500 0.500C7 0.500 7.500 2 7.500 5Z" fill="#eee" stroke="#222" stroke-width=".8"/><rect x="8.500" y="8.500" width="7" height="6" fill="#f4f4f4" stroke="#222" stroke-width=".8"/><path d="M10.500 8.500V14.500M13.500 8.500V14.500" stroke="#222" stroke-width=".7"/></svg>
<svg style="left:1555px;top:1002px;" width="15" height="16" viewBox="0 0 15 16"><path d="M0.500 0.500H8.500L10 2V9.500H0.500Z" fill="#f4f4f4" stroke="#222" stroke-width=".8"/><path d="M2 3H8M2 5H8M2 7H6" stroke="#444" stroke-width=".8"/><path d="M5 12.500H12C14 12.500 14 9.500 12 9.500" fill="none" stroke="#111" stroke-width="1.800"/><path d="M9.500 6.500L14 9.500L9.500 12.500Z" fill="#111"/></svg>
<div style="left:1576px;top:1001px;width:1px;height:19px;background:#525355"></div>
<div style="left:1577px;top:1001px;width:1px;height:19px;background:#7c7d80"></div>
<svg style="left:1582px;top:1002px;" width="17" height="17" viewBox="0 0 17 17"><rect x="7" y="0" width="3" height="17" fill="#808184" transform="rotate(0 8.500 8.500)"/><rect x="7" y="0" width="3" height="17" fill="#808184" transform="rotate(30 8.500 8.500)"/><rect x="7" y="0" width="3" height="17" fill="#808184" transform="rotate(60 8.500 8.500)"/><rect x="7" y="0" width="3" height="17" fill="#808184" transform="rotate(90 8.500 8.500)"/><rect x="7" y="0" width="3" height="17" fill="#808184" transform="rotate(120 8.500 8.500)"/><rect x="7" y="0" width="3" height="17" fill="#808184" transform="rotate(150 8.500 8.500)"/><circle cx="8.500" cy="8.500" r="6" fill="#808184"/><circle cx="8.500" cy="8.500" r="4" fill="#9a9b9e" stroke="#606164" stroke-width="1"/><circle cx="8.500" cy="8.500" r="1.800" fill="#77787b"/></svg>
<svg style="left:1604px;top:1002px;" width="13" height="16" viewBox="0 0 13 16"><path d="M2.500 4C2.500 1 10.500 1 10.500 4" fill="none" stroke="#111" stroke-width="1.300"/><path d="M3.500 4.500C3.500 2.500 9.500 2.500 9.500 4.500" fill="none" stroke="#e8e8e8" stroke-width="1"/><path d="M0.500 5.500H12.500V7.500H0.500Z" fill="#fff" stroke="#111" stroke-width="1"/><path d="M1.500 7.500H11.500L10.500 14.500C9 15.800 4 15.800 2.500 14.500Z" fill="#fafafa" stroke="#111" stroke-width="1.200"/><path d="M4.500 8.500V14M6.500 8.500V14.500M8.500 8.500V14" stroke="#c0c0c0" stroke-width="1"/></svg>
<div style="left:1290px;top:1021px;width:331px;height:18px;background:repeating-linear-gradient(#2e2e30 0 1px,#505052 1px 3px)"></div>
<div style="left:1290px;top:1020px;width:331px;height:1px;background:#88898c"></div>
<div style="left:1621px;top:69px;width:1px;height:970px;background:#4a4a4c"></div>
<div style="left:1622px;top:69px;width:37px;height:970px;background:linear-gradient(90deg,#3a3a3c,#58585a)"></div>
<div style="left:1622px;top:69px;width:1px;height:970px;background:#2a2a2c"></div>
<div style="left:1623px;top:69px;width:36px;height:437px;background:#4c4c4e"></div>
<div style="left:1659px;top:69px;width:1px;height:970px;background:#39393b"></div>
<div style="left:1660px;top:69px;width:1px;height:970px;background:#7a7b7e"></div>
<div style="left:1623px;top:70px;width:35px;height:5px;background:linear-gradient(#3c3c3e,#5a5a5c);border:1px solid #2c2c2e"></div>
<div style="left:1621px;top:75px;width:35px;height:30px;background:linear-gradient(#6b6c70,#626366);border:1px solid #2c2c2e;border-left:none;border-radius:0 3px 3px 0;box-shadow:inset 0 1px 0 #808184"></div>
<div style="left:1623px;top:106px;width:35px;height:3px;background:#3c3c3e"></div>
<svg style="left:1628px;top:79px;" width="24" height="18" viewBox="0 0 24 18"><path d="M1.500 15.500V2.500C1.500 1.500 2 1 3 1H8L10 3.500H18V7" fill="#b4b4b6" stroke="#2c2c2e" stroke-width="1"/><path d="M1.500 15.500L5.500 7H22.500L18 15.500Z" fill="url(#gFolder)" stroke="#2c2c2e" stroke-width="1"/></svg>
<div style="left:1623px;top:115px;width:36px;height:38px;background:#5b5b5e;border:1px solid #2c2c2e;border-radius:1px;box-shadow:inset 0 1px 0 #7c7d80"></div>
<svg style="left:1627px;top:122px;" width="28" height="26" viewBox="0 0 28 26"><path d="M1.500 14V3C1.500 1.800 2.200 1.500 3 1.500H8L10 4H17V7.500H5Z" fill="#66676a" stroke="#7c7d80" stroke-width="1"/><path d="M1.500 14.500L5 7.500H14L12 11" fill="#707174" stroke="#808184" stroke-width=".8"/><rect x="12" y="9" width="13" height="11" fill="#8c8d90"/><path d="M14 18L18 12L21 15L23 18Z" fill="#4a4a4c"/></svg>
<div style="left:1623px;top:159px;width:36px;height:38px;background:#5b5b5e;border:1px solid #2c2c2e;border-radius:1px;box-shadow:inset 0 1px 0 #7c7d80"></div>
<svg style="left:1627px;top:166px;" width="28" height="26" viewBox="0 0 28 26"><path d="M1.500 14V3C1.500 1.800 2.200 1.500 3 1.500H8L10 4H17V7.500H5Z" fill="#66676a" stroke="#7c7d80" stroke-width="1"/><path d="M1.500 14.500L5 7.500H14L12 11" fill="#707174" stroke="#808184" stroke-width=".8"/><rect x="12" y="9" width="13" height="13" fill="#8c8d90"/><path d="M12 9C17 13 20 13 25 9C21 14 21 17 25 22C20 18 17 18 12 22C16 17 16 14 12 9Z" fill="#58585a"/></svg>
<div style="left:1623px;top:203px;width:36px;height:38px;background:#5b5b5e;border:1px solid #2c2c2e;border-radius:1px;box-shadow:inset 0 1px 0 #7c7d80"></div>
<svg style="left:1627px;top:210px;" width="28" height="26" viewBox="0 0 28 26"><path d="M1.500 14V3C1.500 1.800 2.200 1.500 3 1.500H8L10 4H17V7.500H5Z" fill="#66676a" stroke="#7c7d80" stroke-width="1"/><path d="M1.500 14.500L5 7.500H14L12 11" fill="#707174" stroke="#808184" stroke-width=".8"/><rect x="12" y="9" width="13" height="13" fill="#d8d8d8"/><rect x="12" y="9" width="2" height="2" fill="#333"/><rect x="16" y="9" width="2" height="2" fill="#333"/><rect x="20" y="9" width="2" height="2" fill="#333"/><rect x="24" y="9" width="2" height="2" fill="#333"/><rect x="14" y="11" width="2" height="2" fill="#333"/><rect x="18" y="11" width="2" height="2" fill="#333"/><rect x="22" y="11" width="2" height="2" fill="#333"/><rect x="12" y="13" width="2" height="2" fill="#333"/><rect x="16" y="13" width="2" height="2" fill="#333"/><rect x="20" y="13" width="2" height="2" fill="#333"/><rect x="24" y="13" width="2" height="2" fill="#333"/><rect x="14" y="15" width="2" height="2" fill="#333"/><rect x="18" y="15" width="2" height="2" fill="#333"/><rect x="22" y="15" width="2" height="2" fill="#333"/><rect x="12" y="17" width="2" height="2" fill="#333"/><rect x="16" y="17" width="2" height="2" fill="#333"/><rect x="20" y="17" width="2" height="2" fill="#333"/><rect x="24" y="17" width="2" height="2" fill="#333"/><rect x="14" y="19" width="2" height="2" fill="#333"/><rect x="18" y="19" width="2" height="2" fill="#333"/><rect x="22" y="19" width="2" height="2" fill="#333"/><rect x="12" y="21" width="2" height="2" fill="#333"/><rect x="16" y="21" width="2" height="2" fill="#333"/><rect x="20" y="21" width="2" height="2" fill="#333"/><rect x="24" y="21" width="2" height="2" fill="#333"/></svg>
<div style="left:1623px;top:247px;width:36px;height:38px;background:#5b5b5e;border:1px solid #2c2c2e;border-radius:1px;box-shadow:inset 0 1px 0 #7c7d80"></div>
<svg style="left:1627px;top:254px;" width="28" height="26" viewBox="0 0 28 26"><path d="M1.500 14V3C1.500 1.800 2.200 1.500 3 1.500H8L10 4H17V7.500H5Z" fill="#66676a" stroke="#7c7d80" stroke-width="1"/><path d="M1.500 14.500L5 7.500H14L12 11" fill="#707174" stroke="#808184" stroke-width=".8"/><rect x="12" y="9" width="5" height="5" fill="#8c8d90"/><rect x="18" y="9" width="6" height="5" fill="#8c8d90"/><rect x="12" y="15" width="12" height="3" fill="#8c8d90"/><rect x="12" y="19" width="12" height="3" fill="#8c8d90"/></svg>
<div style="left:1623px;top:291px;width:36px;height:38px;background:#5b5b5e;border:1px solid #2c2c2e;border-radius:1px;box-shadow:inset 0 1px 0 #7c7d80"></div>
<svg style="left:1627px;top:298px;" width="28" height="26" viewBox="0 0 28 26"><path d="M1.500 14V3C1.500 1.800 2.200 1.500 3 1.500H8L10 4H17V7.500H5Z" fill="#66676a" stroke="#7c7d80" stroke-width="1"/><path d="M1.500 14.500L5 7.500H14L12 11" fill="#707174" stroke="#808184" stroke-width=".8"/><path d="M20.5 15.0L25.0 15.0" stroke="#3a3a3c" stroke-width="1.600"/><path d="M19.8 16.8L22.9 19.9" stroke="#3a3a3c" stroke-width="1.600"/><path d="M18.0 17.5L18.0 22.0" stroke="#3a3a3c" stroke-width="1.600"/><path d="M16.2 16.8L13.1 19.9" stroke="#3a3a3c" stroke-width="1.600"/><path d="M15.5 15.0L11.0 15.0" stroke="#3a3a3c" stroke-width="1.600"/><path d="M16.2 13.2L13.1 10.1" stroke="#3a3a3c" stroke-width="1.600"/><path d="M18.0 12.5L18.0 8.0" stroke="#3a3a3c" stroke-width="1.600"/><path d="M19.8 13.2L22.9 10.1" stroke="#3a3a3c" stroke-width="1.600"/></svg>
<div style="left:1623px;top:335px;width:36px;height:38px;background:#5b5b5e;border:1px solid #2c2c2e;border-radius:1px;box-shadow:inset 0 1px 0 #7c7d80"></div>
<svg style="left:1627px;top:342px;" width="28" height="26" viewBox="0 0 28 26"><path d="M1.500 14V3C1.500 1.800 2.200 1.500 3 1.500H8L10 4H17V7.500H5Z" fill="#66676a" stroke="#7c7d80" stroke-width="1"/><path d="M1.500 14.500L5 7.500H14L12 11" fill="#707174" stroke="#808184" stroke-width=".8"/><rect x="12" y="9" width="13" height="12" fill="#8c8d90"/><path d="M13.5 19L17 12L19.5 16L21 14L23.5 19Z" fill="#3a3a3c"/></svg>
<div style="left:1623px;top:379px;width:36px;height:38px;background:#5b5b5e;border:1px solid #2c2c2e;border-radius:1px;box-shadow:inset 0 1px 0 #7c7d80"></div>
<svg style="left:1627px;top:386px;" width="28" height="26" viewBox="0 0 28 26"><path d="M1.500 14V3C1.500 1.800 2.200 1.500 3 1.500H8L10 4H17V7.500H5Z" fill="#66676a" stroke="#7c7d80" stroke-width="1"/><path d="M1.500 14.500L5 7.500H14L12 11" fill="#707174" stroke="#808184" stroke-width=".8"/><rect x="11" y="10" width="12" height="11" fill="none" stroke="#8c8d90" stroke-width="1"/><path d="M15 19L16 15L23 8L26 11L19 18Z" fill="#3a3a3c"/></svg>
<div style="left:1623px;top:423px;width:36px;height:38px;background:#5b5b5e;border:1px solid #2c2c2e;border-radius:1px;box-shadow:inset 0 1px 0 #7c7d80"></div>
<svg style="left:1627px;top:430px;" width="28" height="26" viewBox="0 0 28 26"><path d="M1.500 14V3C1.500 1.800 2.200 1.500 3 1.500H8L10 4H17V7.500H5Z" fill="#66676a" stroke="#7c7d80" stroke-width="1"/><path d="M1.500 14.500L5 7.500H14L12 11" fill="#707174" stroke="#808184" stroke-width=".8"/><path d="M12.500 13.500L15.500 10.500H24.500V19L21.500 22.500H12.500Z" fill="#a8a8aa" stroke="#e0e0e0" stroke-width=".8"/><path d="M12.500 13.500H21.500V22.500M21.500 13.500L24.500 10.500" fill="none" stroke="#e0e0e0" stroke-width=".8"/></svg>
<div style="left:1623px;top:467px;width:36px;height:38px;background:#5b5b5e;border:1px solid #2c2c2e;border-radius:1px;box-shadow:inset 0 1px 0 #7c7d80"></div>
<svg style="left:1627px;top:474px;" width="28" height="26" viewBox="0 0 28 26"><path d="M1.500 14V3C1.500 1.800 2.200 1.500 3 1.500H8L10 4H17V7.500H5Z" fill="#66676a" stroke="#7c7d80" stroke-width="1"/><path d="M1.500 14.500L5 7.500H14L12 11" fill="#707174" stroke="#808184" stroke-width=".8"/><circle cx="19" cy="10" r="1.600" fill="#4a4a4c"/><path d="M14 13H24M19 12V18L17 24M19 18L21 24" stroke="#4a4a4c" stroke-width="1.600" fill="none"/></svg>
<div style="left:1661px;top:69px;width:259px;height:17px;background:linear-gradient(#4a4a4c,#39393b);border-top:1px solid #2e2e30"></div>
<div style="left:1662px;top:70px;width:19px;height:16px;background:linear-gradient(#4c4c4e,#3c3c3e);border:1px solid #343436"></div>
<svg style="left:1665px;top:73px;" width="13" height="9" viewBox="0 0 13 9"><path d="M0 0L4 4.5L0 9Z" fill="#8a8b8e"/><path d="M6 1H12M6 4.500H12M6 8H12" stroke="#8a8b8e" stroke-width="1.6"/></svg>
<div style="left:1680px;top:71px;width:83px;height:16px;background:#6b6c70;border:1px solid #4a4a4c;border-bottom:none"></div>
<svg style="left:1685px;top:73px;" width="15" height="15" viewBox="0 0 15 15"><rect x="0" y="0" width="4.500" height="4.500" fill="#0060e0"/><rect x="5" y="0" width="4.500" height="4.500" fill="#101050"/><rect x="10" y="0" width="4.500" height="4.500" fill="#d00040"/><rect x="0" y="5" width="4.500" height="4.500" fill="#d00000"/><rect x="5" y="5" width="4.500" height="4.500" fill="#0050b0"/><rect x="10" y="5" width="4.500" height="4.500" fill="#f0e000"/><rect x="0" y="10" width="4.500" height="4.500" fill="#409000"/><rect x="5" y="10" width="4.500" height="4.500" fill="#005000"/><rect x="10" y="10" width="4.500" height="4.500" fill="#000000"/><rect x="4.500" y="4.500" width="5.500" height="5.500" fill="none" stroke="#ff0000" stroke-width="1"/></svg>
<span class="t" style="left:1706.5px;transform:scaleX(0.867);top:73.0px;font-size:10px;line-height:14px;color:#d8d8da;">カラーセット</span>
<div style="left:1662px;top:92px;width:216px;height:18px;background:linear-gradient(#77787c,#67686c);border:1px solid #4a4a4c;border-radius:3px;box-shadow:inset 0 1px 0 #8a8b8e"></div>
<span class="t" style="left:1727.5px;transform:scaleX(0.845);top:93.0px;font-size:12px;line-height:16px;color:#ffffff;">追加用パレット</span>
<svg style="left:1866px;top:98px;" width="9" height="6" viewBox="0 0 9 6"><path d="M0 0H9L4.500 5Z" fill="#1e1e20"/></svg>
<svg style="left:1881px;top:92px;" width="18" height="18" viewBox="0 0 18 18"><path d="M1 4C1 2.500 2.500 1.800 3.800 2.500V6L5.500 7.500V17H2.500V8.500C1.500 8 1 6 1 4Z" fill="url(#gMetalV)"/><path d="M6.800 5.500C6.800 3.500 8 2.300 9.500 1.800V5.500H13.500V1.800C15 2.300 16.200 3.500 16.200 5.500C16.200 7.500 14.800 8.600 13.500 9V17H9.500V9C8.200 8.600 6.800 7.500 6.800 5.500Z" fill="url(#gWrench)" stroke="#111" stroke-width="1.200"/></svg>
<div style="left:1662px;top:112px;width:245px;height:97px;background:#6b6c70;border-top:1px solid #39393b;border-left:1px solid #39393b;overflow:hidden"></div>
<div style="left:1662px;top:112px;width:245px;height:97px;overflow:hidden"><div style="left:1px;top:1px;width:14px;height:14px;background:#d9c5b0"></div><div style="left:16px;top:1px;width:14px;height:14px;background:#a59888"></div><div style="left:31px;top:1px;width:15px;height:14px;background:#d1a6e3"></div><div style="left:47px;top:1px;width:14px;height:14px;background:#eef6fd"></div><div style="left:62px;top:1px;width:14px;height:14px;background:#bccddc"></div><div style="left:77px;top:1px;width:14px;height:14px;background:#e9c2c0"></div><div style="left:92px;top:1px;width:14px;height:14px;background:#ffe3de"></div><div style="left:107px;top:1px;width:15px;height:14px;background:#f19fa9"></div><div style="left:123px;top:1px;width:14px;height:14px;background:#bcdfce"></div><div style="left:138px;top:1px;width:14px;height:14px;background:#8dc89c"></div><div style="left:153px;top:1px;width:14px;height:14px;background:#0068b7"></div><div style="left:168px;top:1px;width:14px;height:14px;background:#ccb8da"></div><div style="left:183px;top:1px;width:15px;height:14px;background:#fff59e"></div><div style="left:199px;top:1px;width:14px;height:14px;background:#dce46e"></div><div style="left:214px;top:1px;width:14px;height:14px;background:#00885a"></div><div style="left:229px;top:1px;width:14px;height:14px;background:#f6e0c3"></div><div style="left:1px;top:16px;width:14px;height:14px;background:#8aa58a"></div><div style="left:16px;top:16px;width:14px;height:14px;background:#fc90d5"></div><div style="left:31px;top:16px;width:15px;height:14px;background:#4a51a3"></div><div style="left:47px;top:16px;width:14px;height:14px;background:#e085a8"></div><div style="left:62px;top:16px;width:14px;height:14px;background:#001c43"></div><div style="left:77px;top:16px;width:14px;height:14px;background:#fbc95f"></div><div style="left:92px;top:16px;width:14px;height:14px;background:#6f951b"></div><div style="left:107px;top:16px;width:15px;height:14px;background:#cdfd4f"></div><div style="left:123px;top:16px;width:14px;height:14px;background:#bccab5"></div><div style="left:138px;top:16px;width:14px;height:14px;background:#444a2b"></div><div style="left:153px;top:16px;width:14px;height:14px;background:#7c7f58"></div><div style="left:168px;top:16px;width:14px;height:14px;background:#a57652"></div><div style="left:183px;top:16px;width:15px;height:14px;background:#a9c052"></div><div style="left:199px;top:16px;width:14px;height:14px;background:#00a56d"></div><div style="left:214px;top:16px;width:14px;height:14px;background:#5588a3"></div><div style="left:229px;top:16px;width:14px;height:14px;background:#82b0a0"></div><div style="left:1px;top:31px;width:14px;height:14px;background:#5bb05e"></div><div style="left:16px;top:31px;width:14px;height:14px;background:#85cbbe"></div><div style="left:31px;top:31px;width:15px;height:14px;background:#c9f7ec"></div><div style="left:47px;top:31px;width:14px;height:14px;background:#e3fcf4"></div><div style="left:62px;top:31px;width:14px;height:14px;background:#3d96d5"></div><div style="left:77px;top:31px;width:14px;height:14px;background:#8e6800"></div><div style="left:92px;top:31px;width:14px;height:14px;background:#b2e2f0"></div><div style="left:107px;top:31px;width:15px;height:14px;background:#f2f2f4"></div><div style="left:123px;top:31px;width:14px;height:14px;background:#0686a8"></div><div style="left:138px;top:31px;width:14px;height:14px;background:#1478d8"></div><div style="left:153px;top:31px;width:14px;height:14px;background:#fc98fc"></div><div style="left:168px;top:31px;width:14px;height:14px;background:#00cc38"></div><div style="left:183px;top:31px;width:15px;height:14px;background:#00387a"></div><div style="left:199px;top:31px;width:14px;height:14px;background:#9966fc"></div><div style="left:214px;top:31px;width:14px;height:14px;background:#e9b428"></div><div style="left:229px;top:31px;width:14px;height:14px;background:#82c896"></div><div style="left:1px;top:46px;width:14px;height:14px;background:#a9bacb"></div><div style="left:16px;top:46px;width:14px;height:14px;background:#6ccae2"></div><div style="left:31px;top:46px;width:15px;height:14px;background:#00a5c2"></div><div style="left:47px;top:46px;width:14px;height:14px;background:#f19590"></div><div style="left:62px;top:46px;width:14px;height:14px;background:#e2f9fd"></div><div style="left:77px;top:46px;width:14px;height:14px;background:#cc141e"></div><div style="left:92px;top:46px;width:14px;height:14px;background:#669712"></div><div style="left:107px;top:46px;width:15px;height:14px;background:#8cc418"></div><div style="left:123px;top:46px;width:14px;height:14px;background:#c9e48c"></div><div style="left:138px;top:46px;width:14px;height:14px;background:#2c501a"></div><div style="left:153px;top:46px;width:14px;height:14px;background:#669a4a"></div><div style="left:168px;top:46px;width:14px;height:14px;background:#92ca6e"></div><div style="left:183px;top:46px;width:15px;height:14px;background:#ffece0"></div><div style="left:199px;top:46px;width:14px;height:14px;background:#c9e8f0"></div><div style="left:214px;top:46px;width:14px;height:14px;background:#d5e6ea"></div><div style="left:229px;top:46px;width:14px;height:14px;background:#8ccb9a"></div><div style="left:1px;top:61px;width:14px;height:14px;background:#cc6575"></div><div style="left:16px;top:61px;width:14px;height:14px;background:#c27a3c"></div><div style="left:31px;top:61px;width:15px;height:14px;background:#855228"></div><div style="left:47px;top:61px;width:14px;height:14px;background:#8498ae"></div><div style="left:62px;top:61px;width:14px;height:14px;background:#2a0048"></div><div style="left:77px;top:61px;width:14px;height:14px;background:#b08cd2"></div><div style="left:92px;top:61px;width:14px;height:14px;background:#e2d2e8"></div><div style="left:107px;top:61px;width:15px;height:14px;background:#55147c"></div><div style="left:123px;top:61px;width:14px;height:14px;background:#64468a"></div><div style="left:138px;top:61px;width:14px;height:14px;background:#e6e0fa"></div><div style="left:153px;top:61px;width:14px;height:14px;background:#3c387a"></div><div style="left:168px;top:61px;width:14px;height:14px;background:#fed2fc"></div><div style="left:183px;top:61px;width:15px;height:14px;background:#c45ec4"></div><div style="left:199px;top:61px;width:14px;height:14px;background:#78a070"></div><div style="left:214px;top:61px;width:14px;height:14px;background:#6c6438"></div><div style="left:229px;top:61px;width:14px;height:14px;background:#d0ccfc"></div><div style="left:1px;top:76px;width:14px;height:14px;background:#b9fc80"></div><div style="left:16px;top:76px;width:14px;height:14px;background:#f2fde4"></div><div style="left:31px;top:76px;width:15px;height:14px;background:#dc4a00"></div><div style="left:47px;top:76px;width:14px;height:14px;background:#fd7e00"></div><div style="left:62px;top:76px;width:14px;height:14px;background:#fdb85a"></div><div style="left:77px;top:76px;width:14px;height:14px;background:#e26400"></div><div style="left:92px;top:76px;width:14px;height:14px;background:#fecf8a"></div><div style="left:107px;top:76px;width:15px;height:14px;background:#fdc660"></div><div style="left:123px;top:76px;width:14px;height:14px;background:#c85a00"></div><div style="left:138px;top:76px;width:14px;height:14px;background:#fee4b8"></div><div style="left:153px;top:76px;width:14px;height:14px;background:#4e7a48"></div><div style="left:168px;top:76px;width:14px;height:14px;background:#648c62"></div><div style="left:183px;top:76px;width:15px;height:14px;background:#7ea292"></div><div style="left:199px;top:76px;width:14px;height:14px;background:#9cc07a"></div><div style="left:214px;top:76px;width:14px;height:14px;background:#2e5c20"></div><div style="left:229px;top:76px;width:14px;height:14px;background:#b8d8c8"></div><div style="left:1px;top:91px;width:14px;height:6px;background:#78883a"></div><div style="left:16px;top:91px;width:14px;height:6px;background:#86a050"></div><div style="left:31px;top:91px;width:15px;height:6px;background:#d4d87a"></div><div style="left:47px;top:91px;width:14px;height:6px;background:#a4b478"></div><div style="left:62px;top:91px;width:14px;height:6px;background:#e0a0d8"></div><div style="left:77px;top:91px;width:14px;height:6px;background:#b8e4f4"></div><div style="left:92px;top:91px;width:14px;height:6px;background:#e0483a"></div><div style="left:107px;top:91px;width:15px;height:6px;background:#f06a4a"></div><div style="left:123px;top:91px;width:14px;height:6px;background:#900018"></div><div style="left:138px;top:91px;width:14px;height:6px;background:#dc1a3c"></div><div style="left:153px;top:91px;width:14px;height:6px;background:#dce4a8"></div><div style="left:168px;top:91px;width:14px;height:6px;background:#d0ecf4"></div><div style="left:183px;top:91px;width:15px;height:6px;background:#f4ece0"></div><div style="left:199px;top:91px;width:14px;height:6px;background:#008878"></div><div style="left:214px;top:91px;width:14px;height:6px;background:#fcb400"></div><div style="left:229px;top:91px;width:14px;height:6px;background:#f8d888"></div></div>
<div style="left:1723px;top:127px;width:17px;height:16px;border:1px solid #ff0000;box-shadow:inset 0 0 0 1px #fff;background:none"></div>
<div style="left:1907px;top:112px;width:11px;height:97px;background:#5e5e61"></div>
<div style="left:1907px;top:112px;width:11px;height:11px;background:#6b6c70;border:1px solid #8a8b8e;border-radius:2px"></div>
<svg style="left:1909px;top:115px;" width="7" height="5" viewBox="0 0 7 5"><path d="M0 4H7L3.500 0Z" fill="#2a2a2c"/></svg>
<div style="left:1907px;top:198px;width:11px;height:11px;background:#6b6c70;border:1px solid #8a8b8e;border-radius:2px"></div>
<svg style="left:1909px;top:201px;" width="7" height="5" viewBox="0 0 7 5"><path d="M0 0H7L3.500 4Z" fill="#2a2a2c"/></svg>
<div style="left:1907px;top:124px;width:11px;height:41px;background:linear-gradient(90deg,#77787b,#67686b);border:1px solid #8a8b8e;border-radius:2px"></div>
<div style="left:1910px;top:141px;width:5px;height:1px;background:#3a3a3c"></div>
<div style="left:1910px;top:143px;width:5px;height:1px;background:#3a3a3c"></div>
<div style="left:1910px;top:145px;width:5px;height:1px;background:#3a3a3c"></div>
<div style="left:1662px;top:219px;width:8px;height:8px;background:#9a0000;border:1px solid #3a3a3c"></div>
<div style="left:1694px;top:219px;width:8px;height:8px;background:#009a00;border:1px solid #3a3a3c"></div>
<div style="left:1726px;top:219px;width:8px;height:8px;background:#0000cc;border:1px solid #3a3a3c"></div>
<svg style="left:1862px;top:211px;" width="15" height="17" viewBox="0 0 15 17"><path d="M0.500 1C4 1 6 3 6.500 7L8.500 6L6 11L3 7L4.500 7C4 4 3 2.500 0.500 1Z" fill="#111" stroke="#fff" stroke-width=".9"/><rect x="4.500" y="8" width="10" height="2" fill="#000"/><rect x="4.500" y="10" width="10" height="6.500" fill="#555"/><rect x="5.5" y="10.5" width="2.300" height="2.300" fill="#aaa"/><rect x="8.5" y="10.5" width="2.300" height="2.300" fill="#fff"/><rect x="11.5" y="10.5" width="2.300" height="2.300" fill="#ccc"/><rect x="5.5" y="13.5" width="2.300" height="2.300" fill="#999"/><rect x="8.5" y="13.5" width="2.300" height="2.300" fill="#ddd"/><rect x="11.5" y="13.5" width="2.300" height="2.300" fill="#fff"/></svg>
<svg style="left:1882px;top:211px;" width="15" height="17" viewBox="0 0 15 17"><path d="M5 0.500C7 4 9.500 6.500 9.500 9.500C9.500 12.500 7.500 14 5 14C2.500 14 0.500 12.500 0.500 9.500C0.500 6.500 3 4 5 0.500Z" fill="#3a3a3a" stroke="#111" stroke-width=".6"/><circle cx="4" cy="8.500" r="2" fill="#888" opacity=".7"/><path d="M7 13H14M10.500 9.500V16.500" stroke="#000" stroke-width="1.800"/></svg>
<svg style="left:1902px;top:212px;" width="13" height="16" viewBox="0 0 13 16"><path d="M2.500 4C2.500 1 10.500 1 10.500 4" fill="none" stroke="#111" stroke-width="1.300"/><path d="M3.500 4.500C3.500 2.500 9.500 2.500 9.500 4.500" fill="none" stroke="#e8e8e8" stroke-width="1"/><path d="M0.500 5.500H12.500V7.500H0.500Z" fill="#fff" stroke="#111" stroke-width="1"/><path d="M1.500 7.500H11.500L10.500 14.500C9 15.800 4 15.800 2.500 14.500Z" fill="#fafafa" stroke="#111" stroke-width="1.200"/><path d="M4.500 8.500V14M6.500 8.500V14.500M8.500 8.500V14" stroke="#c0c0c0" stroke-width="1"/></svg>
<div style="left:1661px;top:231px;width:259px;height:1px;background:#88898c"></div>
<div style="left:1661px;top:232px;width:259px;height:1px;background:#4a4a4c"></div>
<div style="left:1661px;top:232px;width:259px;height:17px;background:linear-gradient(#4a4a4c,#39393b);border-top:1px solid #2e2e30"></div>
<div style="left:1662px;top:233px;width:19px;height:16px;background:linear-gradient(#4c4c4e,#3c3c3e);border:1px solid #343436"></div>
<svg style="left:1665px;top:236px;" width="13" height="9" viewBox="0 0 13 9"><path d="M0 0L4 4.5L0 9Z" fill="#8a8b8e"/><path d="M6 1H12M6 4.500H12M6 8H12" stroke="#8a8b8e" stroke-width="1.6"/></svg>
<div style="left:1680px;top:234px;width:92px;height:16px;background:#6b6c70;border:1px solid #4a4a4c;border-bottom:none"></div>
<div style="left:1685px;top:237px;width:16px;height:16px;border-radius:50%;background:#e8e8e8"></div>
<div style="left:1684px;top:235px;width:16px;height:16px;border-radius:50%;background:conic-gradient(#ffff00,#00ff00,#00ffff,#0000ff,#ff00ff,#ff0000,#ffff00)"></div>
<div style="left:1689px;top:240px;width:6px;height:6px;border-radius:50%;background:#8a8b8e"></div>
<span class="t" style="left:1706.0px;transform:scaleX(0.892);top:236.0px;font-size:10px;line-height:14px;color:#d8d8da;">カラーサークル</span>
<div style="left:1772px;top:234px;width:28px;height:15px;background:linear-gradient(#5a5a5c,#4a4a4c);border:1px solid #39393b"></div>
<svg style="left:1777px;top:236px;" width="18" height="11" viewBox="0 0 18 11"><rect x="0" y="0" width="18" height="3" fill="#6e6f72"/><rect x="0" y="4.500" width="18" height="3" fill="#77787b"/><rect x="0" y="9" width="18" height="2" fill="#6e6f72"/></svg>
<div style="left:1800px;top:234px;width:28px;height:15px;background:linear-gradient(#5a5a5c,#4a4a4c);border:1px solid #39393b"></div>
<svg style="left:1805px;top:236px;" width="18" height="11" viewBox="0 0 18 11"><rect x="1" y="0" width="6" height="5" fill="#6e6f72"/><rect x="10" y="0" width="6" height="5" fill="#6e6f72"/><rect x="5" y="7" width="8" height="4" fill="#6e6f72"/><path d="M4 5V8H14V5" stroke="#6e6f72" fill="none"/></svg>
<div style="left:1828px;top:234px;width:28px;height:15px;background:linear-gradient(#5a5a5c,#4a4a4c);border:1px solid #39393b"></div>
<svg style="left:1833px;top:236px;" width="18" height="11" viewBox="0 0 18 11"><path d="M2 11V2H14V11" fill="#606164" stroke="#77787b"/><path d="M2 2L5 0H16V9" fill="none" stroke="#77787b"/></svg>
<div style="left:1914px;top:250px;width:1px;height:252px;background:#39393b"></div>
<div style="left:1917px;top:250px;width:1px;height:252px;background:#505153"></div>
<div style="left:1676.0px;top:260.0px;width:222.0px;height:222.0px;border-radius:50%;background:#3a3a3c"></div>
<div style="left:1676.5px;top:260.5px;width:221.0px;height:221.0px;border-radius:50%;background:conic-gradient(#ffff00,#00ff00,#00ffff,#0000ff,#ff00ff,#ff0000,#ffff00)"></div>
<div style="left:1696.0px;top:280.0px;width:182.0px;height:182.0px;border-radius:50%;background:#3a3a3c"></div>
<div style="left:1697.0px;top:281.0px;width:180.0px;height:180.0px;border-radius:50%;background:#6b6c70"></div>
<div style="left:1726px;top:310px;width:123px;height:123px;background:#2a2a2c"></div>
<div style="left:1727px;top:311px;width:121px;height:121px;background:linear-gradient(to top,#000,rgba(0,0,0,0)),linear-gradient(to right,#fff,#0074ff)"></div>
<div style="left:1844px;top:396px;width:8px;height:8px;border:1px solid #000;background:none;box-shadow:inset 0 0 0 1px #fff"></div>
<svg style="left:1820.9383416693988px;top:448.3863455157754px;" width="24" height="24" viewBox="0 0 24 24"><rect x="8.500" y="0.500" width="7" height="23" fill="none" stroke="#111" stroke-width="1" transform="rotate(152.8 12 12)"/></svg>
<div style="left:1661px;top:439px;width:30px;height:30px;background:#7ecbec"></div>
<div style="left:1663px;top:441px;width:26px;height:26px;background:#000"></div>
<div style="left:1664px;top:442px;width:24px;height:24px;background:#fff"></div>
<div style="left:1665px;top:443px;width:22px;height:22px;background:#001c43"></div>
<div style="left:1676px;top:454px;width:30px;height:30px;background:#bccfde;border:1px solid #3a3a3c;clip-path:polygon(0 50%,50% 50%,50% 0,100% 0,100% 100%,0 100%)"></div>
<div style="left:1661px;top:485px;width:45px;height:14px;border:1px solid #2a2a2c;background:repeating-conic-gradient(#8c8c8c 0 25%,#fff 0 50%) 0 0/10px 10px"></div>
<div style="left:1790px;top:489px;width:8px;height:8px;background:#9a0000;border:1px solid #3a3a3c"></div>
<div style="left:1822px;top:489px;width:8px;height:8px;background:#009a00;border:1px solid #3a3a3c"></div>
<div style="left:1854px;top:489px;width:8px;height:8px;background:#0000cc;border:1px solid #3a3a3c"></div>
<span class="t" style="left:1812.0px;transform:scaleX(0.816);top:485.5px;font-size:11px;line-height:15px;color:#ffffff;">0</span>
<span class="t" style="left:1838.0px;transform:scaleX(0.898);top:485.5px;font-size:11px;line-height:15px;color:#ffffff;">30</span>
<span class="t" style="left:1871.0px;transform:scaleX(0.898);top:485.5px;font-size:11px;line-height:15px;color:#ffffff;">67</span>
<div style="left:1892px;top:481px;width:17px;height:17px;border-radius:50%;background:conic-gradient(#ff8000,#ffff00,#00c000,#00c0ff,#8000ff,#ff00a0,#ff8000)"></div>
<div style="left:1894px;top:483px;width:13px;height:13px;border-radius:50%;background:#6b6c70"></div>
<svg style="left:1897px;top:485px;" width="9" height="9" viewBox="0 0 9 9"><path d="M0 0L8.500 4.500L0 9Z" fill="#d03018" stroke="#701000" stroke-width=".6"/></svg>
<div style="left:1661px;top:502px;width:259px;height:1px;background:#88898c"></div>
<div style="left:1661px;top:503px;width:259px;height:1px;background:#4a4a4c"></div>
<div style="left:1661px;top:504px;width:259px;height:17px;background:linear-gradient(#4a4a4c,#39393b);border-top:1px solid #2e2e30"></div>
<div style="left:1662px;top:505px;width:19px;height:16px;background:linear-gradient(#4c4c4e,#3c3c3e);border:1px solid #343436"></div>
<svg style="left:1665px;top:508px;" width="13" height="9" viewBox="0 0 13 9"><path d="M0 0L4 4.5L0 9Z" fill="#8a8b8e"/><path d="M6 1H12M6 4.500H12M6 8H12" stroke="#8a8b8e" stroke-width="1.6"/></svg>
<div style="left:1680px;top:506px;width:66px;height:16px;background:#6b6c70;border:1px solid #4a4a4c;border-bottom:none"></div>
<svg style="left:1685px;top:507px;" width="17" height="17" viewBox="0 0 17 17"><path d="M8.500 0.5L16.500 3.5L8.500 6.5L0.500 3.5Z" fill="#9a9a9a"/><path d="M0.500 3.5L8.500 0.5L16.500 3.5" fill="none" stroke="#111" stroke-width="1.300"/><path d="M8.500 5.0L16.500 8.0L8.500 11.0L0.500 8.0Z" fill="#e0e0e0"/><path d="M0.500 8.0L8.500 5.0L16.500 8.0" fill="none" stroke="#111" stroke-width="1.300"/><path d="M8.500 9.5L16.500 12.5L8.500 15.5L0.500 12.5Z" fill="#ffffff"/><path d="M0.500 12.5L8.500 9.5L16.500 12.5" fill="none" stroke="#111" stroke-width="1.300"/><path d="M0.500 12.500L8.500 15.500L16.500 12.500" fill="none" stroke="#d8d8d8" stroke-width="1"/></svg>
<span class="t" style="left:1706.0px;transform:scaleX(0.882);top:508.0px;font-size:10px;line-height:14px;color:#d8d8da;">レイヤー</span>
<div style="left:1746px;top:506px;width:111px;height:15px;background:linear-gradient(#5a5a5c,#4e4e50);border:1px solid #39393b"></div>
<svg style="left:1752px;top:508px;" width="16" height="12" viewBox="0 0 16 12"><path d="M1 10L5 11.500C7 6 11 2 15 0.500C10 1.500 5 5 3.500 9Z" fill="#444446"/></svg>
<span class="t" style="left:1772.0px;transform:scaleX(0.881);top:508.0px;font-size:10px;line-height:14px;color:#7e7f82;">レイヤープロパティ</span>
<div style="left:1662px;top:527px;width:127px;height:19px;background:linear-gradient(#77787c,#67686c);border:1px solid #4a4a4c;border-radius:3px;box-shadow:inset 0 1px 0 #8a8b8e"></div>
<span class="t" style="left:1707.5px;transform:scaleX(0.958);top:528.5px;font-size:12px;line-height:16px;color:#ffffff;">通常</span>
<svg style="left:1777px;top:534px;" width="9" height="6" viewBox="0 0 9 6"><path d="M0 0H9L4.500 5Z" fill="#1e1e20"/></svg>
<div style="left:1795px;top:532px;width:78px;height:8px;border:1px solid #505153;background:linear-gradient(90deg,rgba(255,255,255,.9),rgba(200,200,200,.35)),repeating-conic-gradient(#fff 0 25%,#b8b8b8 0 50%) 0 0/8px 8px"></div>
<div style="left:1872px;top:526px;width:3px;height:20px;background:#58585a;border:1px solid #4a4a4c"></div>
<span class="t" style="left:1884.0px;transform:scaleX(0.871);top:527.5px;font-size:11px;line-height:15px;color:#ffffff;">100</span>
<svg style="left:1905px;top:529px;" width="10" height="16" viewBox="0 0 10 16"><path d="M0 6H10L5 0Z M0 10H10L5 16Z" fill="#1e1e20"/></svg>
<div style="left:1662px;top:548px;width:38px;height:19px;background:linear-gradient(#77787c,#67686c);border:1px solid #4a4a4c;border-radius:3px;box-shadow:inset 0 1px 0 #8a8b8e"></div>
<div style="left:1664px;top:550px;width:18px;height:15px;background:#6b6c70;border:1px solid #1e1e20"></div>
<svg style="left:1688px;top:555px;" width="9" height="6" viewBox="0 0 9 6"><path d="M0 0H9L4.500 5Z" fill="#1e1e20"/></svg>
<svg style="left:1766px;top:549px;" width="17" height="14" viewBox="0 0 17 14"><ellipse cx="8.500" cy="4" rx="7.500" ry="3.300" fill="none" stroke="#111" stroke-width=".8" stroke-dasharray="1.500 1"/><path d="M1 6.500V9C1 14 16 14 16 9V6.500Z" fill="url(#gMetalV)" stroke="#111" stroke-width=".8"/><ellipse cx="8.500" cy="6.500" rx="7.500" ry="3" fill="#111"/></svg>
<svg style="left:1787px;top:549px;" width="14" height="17" viewBox="0 0 14 17"><path d="M5 5.500H9L10 16.500H4Z" fill="url(#gMetalV)" stroke="#222" stroke-width=".7"/><path d="M5.500 2.500L7 0.500L8.500 2.500V5.500H5.500Z" fill="#eee" stroke="#222" stroke-width=".6"/><path d="M5 3.500L0 1.500V6ZM9 3.500L14 1.500V6Z" fill="#d8d8d8" opacity=".55"/></svg>
<svg style="left:1807px;top:549px;" width="14" height="17" viewBox="0 0 14 17"><g transform="translate(0.5 0.5) scale(1.0)"><path d="M3 7V4.500C3 0 10 0 10 4.500V7" fill="none" stroke="#111" stroke-width="2"/><rect x="0.500" y="7" width="12" height="9" fill="#9a9a9a" stroke="#111" stroke-width="1"/><rect x="5.500" y="9.500" width="2" height="4" fill="#111"/></g></svg>
<svg style="left:1824px;top:549px;" width="20" height="17" viewBox="0 0 20 17"><g transform="translate(0.5 0.5) scale(0.62)"><path d="M3 7V4.500C3 0 10 0 10 4.500V7" fill="none" stroke="#111" stroke-width="2"/><rect x="0.500" y="7" width="12" height="9" fill="#9a9a9a" stroke="#111" stroke-width="1"/><rect x="5.500" y="9.500" width="2" height="4" fill="#111"/></g><text x="4.400" y="9.300" font-size="5" font-family="Liberation Sans,sans-serif" fill="#fff" text-anchor="middle">1</text><path d="M10.500 11V7.500H18.500V14" fill="none" stroke="#e8e8e8" stroke-width="1.200"/><rect x="9" y="12" width="4" height="4" fill="#f4f4f4"/><rect x="14" y="10" width="4.500" height="6" fill="#d0d0d0"/></svg>
<div style="left:1845px;top:548px;width:34px;height:19px;background:linear-gradient(#727376,#66676a);border:1px solid #5a5a5c;border-radius:3px"></div>
<div style="left:1881px;top:548px;width:35px;height:19px;background:linear-gradient(#727376,#66676a);border:1px solid #5a5a5c;border-radius:3px"></div>
<div style="left:1864px;top:549px;width:1px;height:17px;background:#626366"></div>
<div style="left:1900px;top:549px;width:1px;height:17px;background:#626366"></div>
<svg style="left:1849px;top:551px;" width="14" height="14" viewBox="0 0 14 14"><path d="M1 10L3 3L5.500 6L8 1L10.500 6L13 4L11 11Z" fill="#808184"/><path d="M8 8L13 13M13 8L8 13" stroke="#505153" stroke-width="1.600"/></svg>
<svg style="left:1868px;top:555px;" width="9" height="6" viewBox="0 0 9 6"><path d="M0 0H9L4.500 5Z" fill="#55565a"/></svg>
<svg style="left:1884px;top:551px;" width="15" height="14" viewBox="0 0 15 14"><path d="M1 13L12 1M1 1H9L1 11Z" fill="none" stroke="#808184" stroke-width="1.400"/><path d="M8 8L13 13M13 8L8 13" stroke="#505153" stroke-width="1.600"/></svg>
<svg style="left:1905px;top:555px;" width="9" height="6" viewBox="0 0 9 6"><path d="M0 0H9L4.500 5Z" fill="#55565a"/></svg>
<div style="left:1662px;top:570px;width:256px;height:1px;background:#808184"></div>
<svg style="left:1663px;top:574px;" width="17" height="17" viewBox="0 0 17 17"><path d="M8.500 0.5L16.500 3.5L8.500 6.5L0.500 3.5Z" fill="#9a9a9a"/><path d="M0.500 3.5L8.500 0.5L16.500 3.5" fill="none" stroke="#111" stroke-width="1.300"/><path d="M8.500 5.0L16.500 8.0L8.500 11.0L0.500 8.0Z" fill="#e0e0e0"/><path d="M0.500 8.0L8.500 5.0L16.500 8.0" fill="none" stroke="#111" stroke-width="1.300"/><path d="M8.500 9.5L16.500 12.5L8.500 15.5L0.500 12.5Z" fill="#ffffff"/><path d="M0.500 12.5L8.500 9.5L16.500 12.5" fill="none" stroke="#111" stroke-width="1.300"/><path d="M0.500 12.500L8.500 15.500L16.500 12.500" fill="none" stroke="#d8d8d8" stroke-width="1"/></svg>
<svg style="left:1760px;top:575px;" width="14" height="15" viewBox="0 0 14 15"><path d="M0.500 0.500H13.5V10L9 14.5H0.500Z" fill="url(#gPaper)" stroke="#111" stroke-width="1"/><path d="M13.5 10H9V14.5" fill="#bbb" stroke="#111" stroke-width="1"/></svg>
<svg style="left:1779px;top:575px;" width="14" height="15" viewBox="0 0 14 15"><path d="M0.500 0.500H13.5V10L9 14.5H0.500Z" fill="url(#gPaper)" stroke="#111" stroke-width="1"/><path d="M13.5 10H9V14.5" fill="#bbb" stroke="#111" stroke-width="1"/></svg>
<svg style="left:1788px;top:583px;" width="8" height="8" viewBox="0 0 8 8"><path d="M0.500 2.500L2.500 0.500H7.500V5.500L5.500 7.500H0.500Z" fill="#d8d8d8" stroke="#333" stroke-width=".8"/><path d="M0.500 2.500H5.500V7.500M5.500 2.500L7.500 0.500" fill="none" stroke="#333" stroke-width=".8"/></svg>
<svg style="left:1798px;top:575px;" width="18" height="15" viewBox="0 0 18 15"><path d="M0.500 12.500V1.500H5L6.500 3H12.500V12.500Z" fill="url(#gFolder)" stroke="#333" stroke-width="1"/><path d="M9.500 6.500H17.500V11L14 14.500H9.500Z" fill="url(#gPaper)" stroke="#222" stroke-width="1"/></svg>
<svg style="left:1821px;top:575px;" width="12" height="15" viewBox="0 0 12 15"><path d="M4 1H8V6H11.500L6 13L0.500 6H4Z" fill="#77787b" stroke="#5a5b5e" stroke-width="1"/><path d="M1 12L6 14.500L11 12" fill="none" stroke="#5e5f62" stroke-width="1"/></svg>
<svg style="left:1838px;top:575px;" width="17" height="16" viewBox="0 0 17 16"><path d="M8.500 0.500L16.500 4.500L8.500 8.500L0.500 4.500Z" fill="#2a2a2a"/><path d="M1 10L8.500 15L16 10L13 9L8.500 11.500L4 9Z" fill="#f4f4f4" stroke="#333" stroke-width=".5"/><path d="M6.500 3H10.500V8H13L8.500 12.500L4 8H6.500Z" fill="#111" stroke="#fff" stroke-width=".7"/></svg>
<svg style="left:1859px;top:577px;" width="16" height="11" viewBox="0 0 16 11"><rect x="0.500" y="0.500" width="15" height="10" fill="url(#gDarkH)" stroke="#222" stroke-width="1"/><circle cx="7.500" cy="5.500" r="2.800" fill="#fff"/></svg>
<svg style="left:1878px;top:575px;" width="17" height="16" viewBox="0 0 17 16"><path d="M4 1V10H1L5.500 15L10 10H7V1Z" fill="#5c5d60"/><path d="M8 2L16 5L13 10L7 8Z" fill="#77787b" stroke="#5c5d60" stroke-width=".8"/></svg>
<svg style="left:1900px;top:574px;" width="13" height="16" viewBox="0 0 13 16"><path d="M2.500 4C2.500 1 10.500 1 10.500 4" fill="none" stroke="#111" stroke-width="1.300"/><path d="M3.500 4.500C3.500 2.500 9.500 2.500 9.500 4.500" fill="none" stroke="#e8e8e8" stroke-width="1"/><path d="M0.500 5.500H12.500V7.500H0.500Z" fill="#fff" stroke="#111" stroke-width="1"/><path d="M1.500 7.500H11.500L10.500 14.500C9 15.800 4 15.800 2.500 14.500Z" fill="#fafafa" stroke="#111" stroke-width="1.200"/><path d="M4.500 8.500V14M6.500 8.500V14.500M8.500 8.500V14" stroke="#c0c0c0" stroke-width="1"/></svg>
<div style="left:1662px;top:595px;width:256px;height:403px;border:1px solid #39393b;background:#6b6c70"></div>
<div style="left:1905px;top:596px;width:12px;height:401px;background:#5c5d5f;border-left:1px solid #4c4d4f;border-right:2px solid #747578;border-bottom:1px solid #8a8b8e"></div>
<div style="left:1665px;top:596px;width:1px;height:401px;background:#39393b"></div>
<div style="left:1685px;top:596px;width:1px;height:82px;background:#39393b"></div>
<div style="left:1703px;top:596px;width:1px;height:82px;background:#39393b"></div>
<div style="left:1704px;top:596px;width:200px;height:41px;background:linear-gradient(#738997,#5e7685)"></div>
<div style="left:1666px;top:636px;width:238px;height:1px;background:#2e2e30"></div>
<div style="left:1666px;top:677px;width:238px;height:1px;background:#2e2e30"></div>
<div style="left:1904px;top:596px;width:1px;height:82px;background:#39393b"></div>
<svg style="left:1670px;top:612px;" width="13" height="9" viewBox="0 0 13 9"><path d="M0.500 4.500C3 0.500 10 0.500 12.500 4.500C10 8.500 3 8.500 0.500 4.500Z" fill="#fafafa" stroke="#333" stroke-width=".6"/><circle cx="6.500" cy="4.200" r="2.800" fill="#111"/><circle cx="5.500" cy="3.200" r=".8" fill="#fff"/></svg>
<svg style="left:1670px;top:652px;" width="13" height="9" viewBox="0 0 13 9"><path d="M0.500 4.500C3 0.500 10 0.500 12.500 4.500C10 8.500 3 8.500 0.500 4.500Z" fill="#fafafa" stroke="#333" stroke-width=".6"/><circle cx="6.500" cy="4.200" r="2.800" fill="#111"/><circle cx="5.500" cy="3.200" r=".8" fill="#fff"/></svg>
<svg style="left:1688px;top:608px;" width="14" height="14" viewBox="0 0 14 14"><path d="M0.500 13L3 8L11.500 1.500L13 3L6 10.500Z" fill="#d8d8d8" stroke="#1e1e1e" stroke-width=".8"/><path d="M9.500 3L13.500 0.500L11.500 5Z" fill="#111"/></svg>
<div style="left:1708px;top:597px;width:38px;height:38px;background:#1a1a1c"></div>
<div style="left:1709px;top:598px;width:36px;height:36px;background:#8da0ad"></div>
<div style="left:1710px;top:599px;width:34px;height:34px;background:#1a1a1c"></div>
<div style="left:1711px;top:600px;width:32px;height:32px;background:repeating-conic-gradient(#fff 0 25%,#d0d0d0 0 50%) 0 0/8px 8px"></div>
<span class="t" style="left:1750.0px;transform:scaleX(1.013);top:598.5px;font-size:11px;line-height:15px;color:#ffffff;">100 % 通常</span>
<span class="t" style="left:1750.0px;transform:scaleX(0.870);top:617.5px;font-size:11px;line-height:15px;color:#ffffff;">レイヤー 1</span>
<div style="left:1710px;top:640px;width:35px;height:35px;background:#fff;border:1px solid #1a1a1c"></div>
<div style="left:1750px;top:639px;width:20px;height:20px;background:#fff;border:1px solid #1a1a1c"></div>
<svg style="left:1753px;top:641px;" width="14" height="16" viewBox="0 0 14 16"><path d="M0.500 0.500H9L13.500 5V15.500H0.500Z" fill="url(#gPaper)" stroke="#222" stroke-width="1"/><path d="M9 0.500V5H13.500" fill="none" stroke="#222" stroke-width="1"/></svg>
<span class="t" style="left:1749.0px;transform:scaleX(0.958);top:659.0px;font-size:12px;line-height:16px;color:#ffffff;">用紙</span>
<div style="left:1661px;top:998px;width:259px;height:1px;background:#88898c"></div>
<div style="left:1661px;top:1000px;width:259px;height:17px;background:linear-gradient(#4a4a4c,#39393b);border-top:1px solid #2e2e30"></div>
<div style="left:1662px;top:1001px;width:19px;height:16px;background:linear-gradient(#4c4c4e,#3c3c3e);border:1px solid #343436"></div>
<svg style="left:1665px;top:1004px;" width="13" height="9" viewBox="0 0 13 9"><path d="M0 0L4 4.5L0 9Z" fill="#8a8b8e"/><path d="M6 1H12M6 4.500H12M6 8H12" stroke="#8a8b8e" stroke-width="1.6"/></svg>
<div style="left:1680px;top:1002px;width:47px;height:16px;background:#6b6c70;border:1px solid #4a4a4c;border-bottom:none"></div>
<div style="left:1686px;top:1003px;width:14px;height:14px;border-radius:50%;background:#1e1e20"></div>
<svg style="left:1690px;top:1005px;" width="6" height="10" viewBox="0 0 6 10"><circle cx="3" cy="1.800" r="1.600" fill="#f0f0f0"/><path d="M1 4.500H4V8.500H5V10H0.500V8.500H1.800V6H1Z" fill="#f0f0f0"/></svg>
<span class="t" style="left:1706.0px;transform:scaleX(0.850);top:1004.0px;font-size:10px;line-height:14px;color:#b0b0b2;">情報</span>
<span class="t" style="left:1662.5px;transform:scaleX(0.858);top:1020.5px;font-size:11px;line-height:15px;color:#ffffff;">システム:12%</span>
<span class="t" style="left:1731.0px;transform:scaleX(0.792);top:1020.5px;font-size:11px;line-height:15px;color:#ffffff;">アプリケーション: 4%</span>
<div style="left:1919px;top:24px;width:1px;height:1015px;background:#4a4a4c"></div>
<div style="left:899px;top:425px;width:102px;height:102px;background:#8e8e90;border-radius:3px"></div>
<svg style="left:901px;top:427px;overflow:hidden;" width="98" height="98" viewBox="0 0 98 98"><rect width="98" height="98" filter="url(#texl)"/><g opacity="0.45"><circle cx="49.0" cy="49.0" r="9.2" fill="url(#bspot)"/><circle cx="77.3" cy="60.7" r="6.1" fill="url(#bspot)" opacity=".8"/><circle cx="60.7" cy="77.3" r="6.1" fill="url(#bspot)" opacity=".8"/><circle cx="37.3" cy="77.3" r="6.1" fill="url(#bspot)" opacity=".8"/><circle cx="20.7" cy="60.7" r="6.1" fill="url(#bspot)" opacity=".8"/><circle cx="20.7" cy="37.3" r="6.1" fill="url(#bspot)" opacity=".8"/><circle cx="37.3" cy="20.7" r="6.1" fill="url(#bspot)" opacity=".8"/><circle cx="60.7" cy="20.7" r="6.1" fill="url(#bspot)" opacity=".8"/><circle cx="77.3" cy="37.3" r="6.1" fill="url(#bspot)" opacity=".8"/><circle cx="66.4" cy="49.0" r="8.2" fill="url(#dspot)"/><circle cx="49.0" cy="66.4" r="8.2" fill="url(#dspot)"/><circle cx="31.6" cy="49.0" r="8.2" fill="url(#dspot)"/><circle cx="49.0" cy="31.6" r="8.2" fill="url(#dspot)"/><circle cx="12.2" cy="12.2" r="7.1" fill="url(#dspot)"/><circle cx="85.8" cy="12.2" r="7.1" fill="url(#dspot)"/><circle cx="12.2" cy="85.8" r="7.1" fill="url(#dspot)"/><circle cx="85.8" cy="85.8" r="7.1" fill="url(#dspot)"/></g><path d="M8 12.5H17M12.5 8V17" stroke="#fff" stroke-width="1"/><path d="M82 12.5H91M86.5 8V17" stroke="#fff" stroke-width="1"/><path d="M8 86.5H17M12.5 82V91" stroke="#fff" stroke-width="1"/><path d="M82 86.5H91M86.5 82V91" stroke="#fff" stroke-width="1"/></svg>
<svg style="left:0px;top:0px;pointer-events:none;" width="1920" height="1039" viewBox="0 0 1920 1039"><path d="M1457.0 182.3 L1455.1 182.5 L1452.9 182.8 L1450.3 183.2 L1447.4 183.6 L1444.2 184.0 L1440.8 184.5 L1437.3 185.0 L1433.6 185.5 L1429.8 186.0 L1426.0 186.6 L1422.2 187.1 L1418.5 187.7 L1414.8 188.3 L1411.3 188.8 L1408.0 189.4 L1404.9 189.9 L1402.1 190.4 L1399.2 191.0 L1396.5 191.5 L1393.8 192.1 L1391.1 192.6 L1388.5 193.2 L1386.0 193.8 L1383.4 194.3 L1380.9 194.9 L1378.4 195.5 L1375.9 196.1 L1373.4 196.7 L1370.9 197.3 L1368.3 197.9 L1365.8 198.6 L1363.2 199.2 L1360.6 199.9 L1358.0 200.5 L1355.4 201.2 L1352.8 201.9 L1350.2 202.6 L1347.6 203.2 L1345.0 204.0 L1342.4 204.7 L1339.8 205.4 L1337.2 206.1 L1334.6 206.8 L1332.0 207.6 L1329.4 208.3 L1326.8 209.1 L1324.2 209.8 L1321.6 210.6 L1319.0 211.3 L1316.6 212.0 L1314.2 212.7 L1311.8 213.4 L1309.5 214.1 L1307.2 214.8 L1304.8 215.5 L1302.5 216.2 L1300.0 216.9 L1297.5 217.7 L1295.0 218.6 L1292.2 219.4 L1289.4 220.4 L1286.4 221.4 L1283.2 222.4 L1279.8 223.6 L1276.2 224.8 L1272.3 226.2 L1268.2 227.6 L1263.9 229.2 L1259.4 230.8 L1254.8 232.4 L1250.1 234.1 L1245.4 235.8 L1240.7 237.5 L1235.9 239.2 L1231.3 241.0 L1226.7 242.6 L1222.2 244.3 L1217.9 245.8 L1213.8 247.3 L1210.0 248.7 L1206.3 250.1 L1202.7 251.4 L1199.3 252.6 L1196.0 253.8 L1192.8 255.0 L1189.7 256.1 L1186.7 257.3 L1183.6 258.4 L1180.7 259.5 L1177.7 260.6 L1174.8 261.7 L1171.9 262.8 L1168.9 263.9 L1165.9 265.0 L1162.9 266.2 L1159.8 267.4 L1156.7 268.6 L1153.5 269.9 L1150.4 271.1 L1147.2 272.4 L1144.1 273.7 L1141.0 274.9 L1137.8 276.2 L1134.7 277.5 L1131.6 278.8 L1128.4 280.1 L1125.3 281.4 L1122.1 282.7 L1119.0 284.0 L1115.9 285.3 L1112.7 286.7 L1109.6 288.0 L1106.4 289.3 L1103.2 290.7 L1100.0 292.1 L1096.7 293.5 L1093.4 294.9 L1090.1 296.3 L1086.8 297.7 L1083.5 299.1 L1080.2 300.5 L1077.0 301.9 L1073.9 303.3 L1070.8 304.6 L1067.8 306.0 L1065.0 307.3 L1062.2 308.5 L1059.5 309.8 L1057.0 310.9 L1054.6 312.1 L1052.3 313.2 L1050.2 314.2 L1048.1 315.3 L1046.1 316.3 L1044.2 317.3 L1042.3 318.3 L1040.4 319.2 L1038.5 320.2 L1036.7 321.2 L1034.8 322.2 L1032.8 323.2 L1030.8 324.3 L1028.8 325.4 L1026.7 326.5 L1024.5 327.6 L1022.2 328.7 L1020.0 329.8 L1017.8 331.0 L1015.6 332.1 L1013.3 333.3 L1011.0 334.4 L1008.7 335.6 L1006.4 336.8 L1004.0 338.0 L1001.7 339.3 L999.2 340.5 L996.8 341.8 L994.3 343.1 L991.7 344.5 L989.2 345.9 L986.5 347.3 L983.8 348.7 L981.0 350.2 L978.1 351.7 L975.2 353.2 L972.3 354.8 L969.3 356.3 L966.4 357.9 L963.4 359.5 L960.4 361.2 L957.4 362.8 L954.4 364.5 L951.5 366.2 L948.6 367.8 L945.8 369.5 L943.0 371.2 L940.3 372.9 L937.5 374.7 L934.7 376.6 L931.9 378.4 L929.1 380.3 L926.4 382.2 L923.6 384.1 L920.9 386.1 L918.3 387.9 L915.7 389.8 L913.2 391.6 L910.7 393.4 L908.4 395.1 L906.2 396.8 L904.1 398.3 L902.1 399.8 L900.2 401.2 L898.5 402.6 L896.8 403.9 L895.2 405.1 L893.8 406.3 L892.4 407.5 L891.1 408.6 L889.8 409.6 L888.7 410.7 L887.5 411.7 L886.4 412.6 L885.4 413.6 L884.4 414.5 L883.4 415.5 L882.4 416.4 L881.4 417.3 L880.4 418.2 L879.5 419.2 L878.6 420.1 L877.7 421.0 L876.9 421.9 L876.1 422.7 L875.4 423.6 L874.7 424.4 L874.1 425.2 L873.4 425.9 L872.8 426.7 L872.3 427.4 L871.7 428.0 L871.2 428.7 L870.8 429.3 L870.3 429.9 L869.9 430.5 L869.5 431.0 L869.1 431.6 L868.7 432.1 L868.5 432.6 L868.2 433.1 L867.9 433.6 L867.7 434.0 L867.6 434.4 L867.4 434.7 L867.3 435.0 L867.2 435.3 L867.1 435.6 L867.0 435.7 L867.0 435.9 L866.9 436.0 L872.1 439.0 L872.3 438.8 L872.4 438.5 L872.6 438.2 L872.7 438.0 L872.9 437.7 L873.0 437.5 L873.1 437.2 L873.3 436.9 L873.5 436.7 L873.7 436.3 L873.9 436.0 L874.2 435.7 L874.4 435.3 L874.7 434.9 L875.1 434.4 L875.5 433.9 L875.9 433.4 L876.4 432.8 L876.9 432.2 L877.4 431.5 L878.0 430.8 L878.6 430.2 L879.2 429.4 L879.8 428.7 L880.4 427.9 L881.1 427.2 L881.8 426.4 L882.6 425.6 L883.4 424.7 L884.2 423.9 L885.1 423.0 L886.0 422.1 L887.0 421.2 L887.9 420.2 L888.9 419.3 L889.9 418.3 L890.8 417.4 L891.9 416.4 L892.9 415.4 L894.1 414.4 L895.2 413.3 L896.5 412.2 L897.8 411.1 L899.2 409.9 L900.7 408.7 L902.2 407.4 L903.9 406.0 L905.7 404.6 L907.7 403.0 L909.7 401.4 L911.9 399.7 L914.2 397.9 L916.5 396.1 L919.0 394.2 L921.5 392.3 L924.1 390.4 L926.7 388.4 L929.4 386.5 L932.1 384.5 L934.8 382.6 L937.5 380.6 L940.2 378.8 L942.9 376.9 L945.6 375.2 L948.2 373.5 L951.0 371.7 L953.8 370.0 L956.7 368.3 L959.5 366.6 L962.5 364.9 L965.4 363.2 L968.3 361.5 L971.3 359.9 L974.2 358.2 L977.1 356.6 L979.9 355.0 L982.8 353.5 L985.5 351.9 L988.2 350.4 L990.8 348.9 L993.4 347.5 L995.9 346.1 L998.4 344.8 L1000.8 343.4 L1003.2 342.1 L1005.6 340.9 L1007.9 339.6 L1010.2 338.4 L1012.5 337.2 L1014.7 336.0 L1017.0 334.8 L1019.2 333.6 L1021.4 332.4 L1023.6 331.3 L1025.8 330.1 L1027.9 328.9 L1030.1 327.8 L1032.1 326.7 L1034.1 325.6 L1036.0 324.6 L1037.9 323.5 L1039.8 322.5 L1041.6 321.5 L1043.5 320.5 L1045.3 319.5 L1047.2 318.5 L1049.2 317.4 L1051.3 316.4 L1053.4 315.3 L1055.6 314.2 L1058.0 313.0 L1060.5 311.8 L1063.1 310.6 L1065.9 309.3 L1068.8 308.0 L1071.7 306.7 L1074.8 305.3 L1077.9 303.9 L1081.1 302.5 L1084.3 301.1 L1087.6 299.6 L1090.9 298.2 L1094.2 296.8 L1097.5 295.4 L1100.8 293.9 L1104.0 292.6 L1107.2 291.2 L1110.4 289.8 L1113.5 288.5 L1116.6 287.1 L1119.8 285.8 L1122.9 284.5 L1126.0 283.2 L1129.1 281.8 L1132.3 280.5 L1135.4 279.2 L1138.5 277.9 L1141.7 276.6 L1144.8 275.3 L1147.9 274.0 L1151.0 272.8 L1154.2 271.5 L1157.3 270.2 L1160.4 269.0 L1163.5 267.8 L1166.5 266.6 L1169.5 265.4 L1172.5 264.3 L1175.4 263.2 L1178.3 262.0 L1181.2 260.9 L1184.2 259.8 L1187.2 258.7 L1190.2 257.6 L1193.3 256.4 L1196.5 255.2 L1199.8 254.0 L1203.2 252.7 L1206.8 251.4 L1210.4 250.1 L1214.3 248.6 L1218.4 247.1 L1222.7 245.5 L1227.2 243.9 L1231.7 242.2 L1236.4 240.5 L1241.1 238.7 L1245.8 237.0 L1250.6 235.3 L1255.2 233.5 L1259.8 231.9 L1264.3 230.3 L1268.6 228.7 L1272.7 227.3 L1276.6 225.9 L1280.2 224.6 L1283.6 223.5 L1286.7 222.4 L1289.7 221.4 L1292.6 220.4 L1295.3 219.5 L1297.9 218.7 L1300.3 217.9 L1302.8 217.2 L1305.1 216.4 L1307.4 215.7 L1309.8 215.0 L1312.1 214.3 L1314.4 213.6 L1316.8 212.9 L1319.3 212.2 L1321.8 211.4 L1324.4 210.7 L1327.0 209.9 L1329.6 209.2 L1332.2 208.4 L1334.8 207.7 L1337.4 206.9 L1340.0 206.2 L1342.6 205.5 L1345.2 204.8 L1347.8 204.1 L1350.4 203.4 L1353.0 202.7 L1355.6 202.0 L1358.2 201.3 L1360.8 200.6 L1363.4 200.0 L1366.0 199.3 L1368.5 198.7 L1371.1 198.1 L1373.6 197.4 L1376.1 196.8 L1378.6 196.2 L1381.1 195.6 L1383.6 195.0 L1386.1 194.4 L1388.7 193.8 L1391.3 193.3 L1393.9 192.7 L1396.6 192.1 L1399.4 191.6 L1402.2 191.0 L1405.1 190.5 L1408.1 189.9 L1411.4 189.4 L1414.9 188.8 L1418.5 188.2 L1422.3 187.6 L1426.1 187.1 L1429.9 186.5 L1433.6 185.9 L1437.3 185.4 L1440.9 184.9 L1444.3 184.4 L1447.4 183.9 L1450.3 183.5 L1452.9 183.2 L1455.2 182.8 L1457.0 182.5ZM866.5 437.5a3.0 3.0 0 1 0 6.0 0a3.0 3.0 0 1 0 -6.0 0Z" fill="#cc0f1a"/><path d="M868.6 408.2 L868.4 408.7 L868.3 409.3 L868.1 409.9 L867.9 410.7 L867.7 411.5 L867.4 412.3 L867.2 413.2 L867.0 414.2 L866.7 415.1 L866.4 416.1 L866.2 417.1 L865.9 418.1 L865.7 419.1 L865.4 420.0 L865.2 421.0 L864.9 421.9 L864.7 422.7 L864.4 423.6 L864.2 424.5 L863.9 425.4 L863.7 426.3 L863.4 427.2 L863.2 428.1 L862.9 429.0 L862.7 429.9 L862.4 430.7 L862.2 431.6 L861.9 432.5 L861.7 433.3 L861.5 434.2 L861.2 435.0 L861.0 435.8 L860.8 436.6 L860.6 437.4 L860.4 438.2 L860.2 439.0 L860.0 439.8 L859.8 440.6 L859.6 441.4 L859.5 442.1 L859.3 442.9 L859.1 443.6 L859.0 444.2 L858.8 444.8 L858.7 445.4 L858.5 445.9 L858.4 446.4 L858.3 446.7 L860.9 447.3 L860.9 446.9 L861.0 446.4 L861.1 445.9 L861.2 445.3 L861.3 444.7 L861.4 444.1 L861.6 443.4 L861.7 442.6 L861.9 441.9 L862.0 441.1 L862.2 440.3 L862.3 439.5 L862.5 438.6 L862.6 437.8 L862.8 437.0 L863.0 436.2 L863.1 435.4 L863.3 434.6 L863.5 433.8 L863.7 432.9 L863.9 432.0 L864.1 431.2 L864.3 430.3 L864.5 429.4 L864.7 428.5 L864.9 427.5 L865.1 426.6 L865.3 425.7 L865.5 424.8 L865.7 423.9 L865.9 423.0 L866.1 422.1 L866.3 421.3 L866.5 420.3 L866.7 419.4 L867.0 418.4 L867.2 417.4 L867.4 416.4 L867.7 415.4 L867.9 414.4 L868.1 413.4 L868.3 412.5 L868.5 411.7 L868.7 410.9 L868.9 410.1 L869.0 409.4 L869.1 408.9 L869.2 408.4Z" fill="#cc0f1a"/><path d="M859.0 448.0 L859.2 448.1 L859.5 448.2 L859.7 448.3 L860.1 448.4 L860.4 448.6 L860.8 448.7 L861.2 448.9 L861.7 449.0 L862.2 449.2 L862.6 449.4 L863.2 449.5 L863.7 449.7 L864.2 449.8 L864.8 449.9 L865.3 450.0 L865.9 450.1 L866.5 450.2 L867.0 450.2 L867.6 450.3 L868.2 450.3 L868.8 450.4 L869.4 450.4 L870.0 450.4 L870.7 450.4 L871.3 450.4 L872.0 450.4 L872.7 450.4 L873.4 450.4 L874.1 450.4 L874.8 450.3 L875.5 450.3 L876.3 450.2 L877.1 450.1 L878.0 449.9 L878.9 449.8 L879.8 449.6 L880.7 449.4 L881.7 449.2 L882.7 449.0 L883.6 448.8 L884.6 448.5 L885.5 448.3 L886.3 448.1 L887.2 447.9 L887.9 447.8 L888.5 447.6 L889.1 447.5 L889.5 447.4 L888.5 443.0 L888.0 443.1 L887.4 443.3 L886.8 443.5 L886.0 443.7 L885.2 443.9 L884.4 444.2 L883.5 444.4 L882.6 444.7 L881.7 444.9 L880.7 445.2 L879.8 445.4 L878.9 445.7 L878.0 445.9 L877.2 446.1 L876.4 446.3 L875.7 446.4 L875.0 446.6 L874.4 446.7 L873.7 446.8 L873.0 446.9 L872.4 447.0 L871.8 447.1 L871.2 447.2 L870.5 447.2 L869.9 447.3 L869.4 447.4 L868.8 447.4 L868.2 447.4 L867.7 447.5 L867.1 447.5 L866.6 447.5 L866.1 447.5 L865.6 447.5 L865.1 447.5 L864.6 447.4 L864.1 447.4 L863.7 447.3 L863.2 447.2 L862.7 447.1 L862.3 447.0 L861.8 446.9 L861.4 446.8 L861.0 446.7 L860.6 446.7 L860.3 446.6 L859.9 446.5 L859.7 446.5 L859.4 446.4ZM886.7 445.2a2.3 2.3 0 1 0 4.6 0a2.3 2.3 0 1 0 -4.6 0Z" fill="#cc0f1a"/></svg>
<svg style="left:948px;top:522px;" width="26" height="34" viewBox="0 0 26 34"><path d="M2.5 1.5V18L6.5 14.5L9 20.5L11.5 19.5L9 13.5H14Z" fill="#fff" stroke="#000" stroke-width="1"/><rect x="5.500" y="17.500" width="9" height="9" fill="#fff" stroke="#000" stroke-width="1" stroke-dasharray="1 1"/><rect x="11.5" y="21.5" width="10" height="10" fill="#fff" stroke="#000" stroke-width="1"/><path d="M13.5 26.5H19.5M16.5 23.5V29.5" stroke="#000" stroke-width="1"/></svg>
<div style="left:1052px;top:626px;width:425px;height:86px;background:#e6fcf6"></div>
<span class="t" style="left:1063.5px;transform:scaleX(1.015);top:631.5px;font-size:25px;line-height:29px;color:#d4222c;font-weight:300;letter-spacing:3px;">素材パレットからキャンバスへ</span>
<span class="t" style="left:1167.0px;transform:scaleX(0.932);top:671.0px;font-size:25px;line-height:29px;color:#d4222c;font-weight:300;letter-spacing:3px;">D&amp;Dで貼り付け</span>
</body></html>
